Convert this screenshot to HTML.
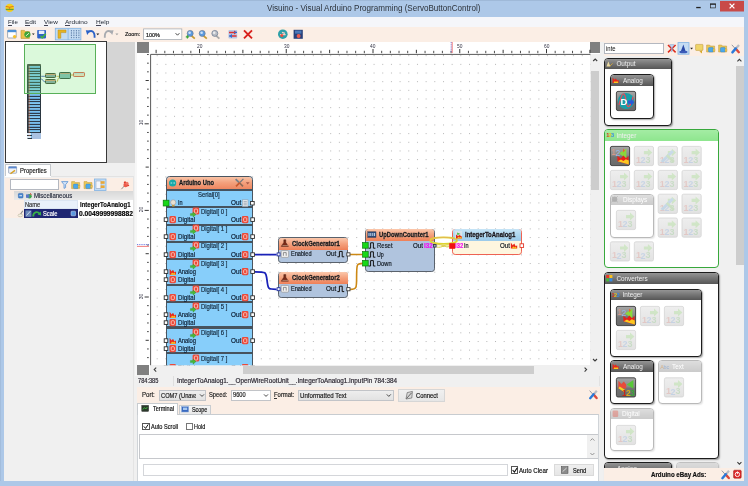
<!DOCTYPE html>
<html><head><meta charset="utf-8"><title>Visuino</title>
<style>
html,body{margin:0;padding:0}
body{width:748px;height:486px;overflow:hidden;position:relative;background:#adc8e8;font-family:"Liberation Sans",sans-serif;}
#w{position:absolute;left:0;top:0;width:748px;height:486px;overflow:hidden;filter:blur(0.35px)}
#w div{position:absolute}
.t{-webkit-text-stroke:0.18px;position:absolute;white-space:nowrap;line-height:1;transform-origin:0 50%;display:block}
.ov{position:absolute;left:0;top:0;pointer-events:none}
</style></head>
<body><div id="w">
<svg class="ov" width="748" height="486" viewBox="0 0 748 486">
<ellipse cx="9.7" cy="7.9" rx="4.3" ry="4.2" fill="#f6d020"/>
<rect x="5.8" y="8.8" width="7.8" height="1.3" fill="#6aa030"/>
<path d="M5.8 6.4 L9.6 7.2 L13.6 6.4 M9.6 7.2 V9" stroke="#e07818" stroke-width="1" fill="none"/>
<rect x="720" y="0" width="24" height="11.5" fill="#c84a48"/>
<path d="M729.6 3.6 L734.4 8.4 M734.4 3.6 L729.6 8.4" stroke="#fff" stroke-width="1.3"/>
<rect x="696.2" y="6.9" width="4.5" height="1.3" fill="#222"/>
<rect x="710.4" y="4" width="5.2" height="3.9" fill="none" stroke="#2a2a2a" stroke-width="0.7"/>
<rect x="710" y="3.6" width="6" height="1.1" fill="#222"/>
</svg>
<span class="t" style="left:267.00px;top:4px;font-size:8.4px;font-weight:normal;color:#2c323a;transform:scaleX(0.9622);-webkit-text-stroke:0;">Visuino - Visual Arduino Programming (ServoButtonControl)</span>
<div style="left:4px;top:16.8px;width:740px;height:464px;background:#f0f0f0;"></div>
<div style="left:4px;top:16.8px;width:740px;height:10.2px;background:#f5f6fa;"></div>
<div style="left:0px;top:0px;width:748px;height:0.8px;background:#9fb9d8;"></div>
<div style="left:0px;top:0px;width:0.8px;height:486px;background:#a3bddc;"></div>
<span class="t" style="left:7.80px;top:19px;font-size:6.2px;font-weight:normal;color:#1c2430;transform:scaleX(0.9809);-webkit-text-stroke:0;">File</span>
<div style="left:7.8px;top:25.2px;width:3.71502957432367px;height:0.6px;background:#445;"></div>
<span class="t" style="left:25.40px;top:19px;font-size:6.2px;font-weight:normal;color:#1c2430;transform:scaleX(1.0483);-webkit-text-stroke:0;">Edit</span>
<div style="left:25.4px;top:25.2px;width:4.335385591875594px;height:0.6px;background:#445;"></div>
<span class="t" style="left:43.80px;top:19px;font-size:6.2px;font-weight:normal;color:#1c2430;transform:scaleX(1.0355);-webkit-text-stroke:0;">View</span>
<div style="left:43.8px;top:25.2px;width:4.282343534200771px;height:0.6px;background:#445;"></div>
<span class="t" style="left:65.20px;top:19px;font-size:6.2px;font-weight:normal;color:#1c2430;transform:scaleX(1.0575);-webkit-text-stroke:0;">Arduino</span>
<div style="left:65.2px;top:25.2px;width:4.373400421567961px;height:0.6px;background:#445;"></div>
<span class="t" style="left:96.00px;top:19px;font-size:6.2px;font-weight:normal;color:#1c2430;transform:scaleX(1.0508);-webkit-text-stroke:0;">Help</span>
<div style="left:96px;top:25.2px;width:4.705219174960115px;height:0.6px;background:#445;"></div>
<div style="left:4px;top:27px;width:740px;height:14.5px;background:#fbeee5;"></div>
<svg class="ov" width="748" height="486" viewBox="0 0 748 486">
<rect x="7.6" y="30" width="8.6" height="8" rx="0.8" fill="#fff" stroke="#8a98a8" stroke-width="0.8"/>
<rect x="7.6" y="30" width="8.6" height="2.2" fill="#4a90d8"/>
<circle cx="14.6" cy="36.6" r="1.7" fill="#f6c02a"/>
<path d="M21 30.4 h3.4 l1 1.2 h4 v6.8 h-8.4z" fill="#e9c24a" stroke="#b8902a" stroke-width="0.6"/>
<circle cx="27.4" cy="34.6" r="3.1" fill="#3fa53a"/>
<path d="M25.8 36 L29 33.2" stroke="#d8f0c8" stroke-width="1"/>
<path d="M31.9 33.4 h2.8 l-1.4 1.6z" fill="#222"/>
<rect x="37.2" y="30" width="8.8" height="8.4" rx="0.8" fill="#2f62c8"/>
<rect x="38.8" y="30.6" width="5.6" height="3.4" fill="#e8eef8"/>
<path d="M40.6 36 l1.6 1.8 l3.6 -4" stroke="#46b43c" stroke-width="1.5" fill="none"/>
<rect x="55.3" y="28.3" width="25.6" height="11.6" fill="#c4dcf3" stroke="#7fb2e4" stroke-width="0.8"/>
<path d="M68.1 28.3 v11.6" stroke="#7fb2e4" stroke-width="0.8"/>
<path d="M58 38.2 v-8.2 h8 v2.6 h-5.2 v5.6z" fill="#e6b422" stroke="#b88a18" stroke-width="0.5"/>
<path d="M71.4 30 v8.2" stroke="#5f7fa8" stroke-width="1" stroke-dasharray="1.4 0.9"/>
<path d="M73.9 30 v8.2" stroke="#5f7fa8" stroke-width="1" stroke-dasharray="1.4 0.9"/>
<path d="M76.4 30 v8.2" stroke="#5f7fa8" stroke-width="1" stroke-dasharray="1.4 0.9"/>
<path d="M78.9 30 v8.2" stroke="#5f7fa8" stroke-width="1" stroke-dasharray="1.4 0.9"/>
<path d="M88 32.2 c3.2 -2.6 7 -1.2 6.6 5.6" stroke="#2a62c8" stroke-width="1.9" fill="none"/>
<path d="M85.8 30.2 l4.6 0.4 l-3.2 4.4z" fill="#2a62c8"/>
<path d="M96.3 33.6 h3 l-1.5 1.7z" fill="#222"/>
<path d="M111.4 32.2 c-3.2 -2.6 -7 -1.2 -6.6 5.6" stroke="#a8abb0" stroke-width="1.9" fill="none"/>
<path d="M113.6 30.2 l-4.6 0.4 l3.2 4.4z" fill="#a8abb0"/>
<path d="M115.4 33.6 h3 l-1.5 1.7z" fill="#a0a0a0"/>
<rect x="143.6" y="28.9" width="38.2" height="10.6" fill="#fff" stroke="#a9aeb6" stroke-width="0.8"/>
<path d="M175.6 33.2 l1.9 2 l1.9 -2" stroke="#333" stroke-width="0.9" fill="none"/>
<path d="M191.4 35.6 l3.4 3" stroke="#c89a30" stroke-width="1.8"/>
<circle cx="190.20000000000002" cy="33.4" r="3" fill="#5a9ae0" stroke="#6a7a90" stroke-width="0.7"/>
<circle cx="189.6" cy="32.8" r="1.3" fill="#fff" opacity="0.7"/>
<path d="M185.8 36.8 h3.2 M187.4 35.2 v3.2" stroke="#3aa53a" stroke-width="1.2"/>
<path d="M203.4 35.6 l3.4 3" stroke="#c89a30" stroke-width="1.8"/>
<circle cx="202.20000000000002" cy="33.4" r="3" fill="#5a9ae0" stroke="#6a7a90" stroke-width="0.7"/>
<circle cx="201.6" cy="32.8" r="1.3" fill="#fff" opacity="0.7"/>

<path d="M216 35.6 l3.4 3" stroke="#a8a8a8" stroke-width="1.8"/>
<circle cx="214.8" cy="33.4" r="3" fill="#b8bcc4" stroke="#6a7a90" stroke-width="0.7"/>
<circle cx="214.2" cy="32.8" r="1.3" fill="#fff" opacity="0.7"/>

<rect x="228.4" y="30" width="8.8" height="8.4" rx="1" fill="#b8c8e4"/>
<path d="M229 32.4 h5 M231.6 36 h5" stroke="#e03030" stroke-width="1.5"/>
<path d="M234 30.4 l3 2 l-3 2z" fill="#e03030"/><path d="M232 34 l-3 2 l3 2z" fill="#3a68c8"/>
<path d="M229 36 h3 M234 32.4 h3" stroke="#3a68c8" stroke-width="1.2"/>
<path d="M244 30.4 L252 38.4 M252 30.4 L244 38.4" stroke="#d8201c" stroke-width="1.9"/>
<circle cx="282.8" cy="34.2" r="4.8" fill="#2fa0a8"/>
<path d="M280 34.6 h5.6 M282 32.4 l3 1" stroke="#f6d0c8" stroke-width="1.2"/>
<circle cx="281.8" cy="35.6" r="1.5" fill="#e85040"/>
<rect x="293.6" y="29.8" width="9.2" height="9" fill="#28407a"/>
<rect x="295" y="30.6" width="6.4" height="3" fill="#4a78b8"/>
<circle cx="298.6" cy="36" r="2" fill="#e85a50"/>
</svg>
<span class="t" style="left:125.00px;top:31px;font-size:6.2px;font-weight:normal;color:#222;transform:scaleX(0.8764);">Zoom:</span>
<span class="t" style="left:146.00px;top:32px;font-size:6.2px;font-weight:normal;color:#111;transform:scaleX(0.8829);">100%</span>
<div style="left:106.4px;top:41.5px;width:28.6px;height:121px;background:#d5d5d5;"></div>
<div style="left:4.5px;top:41.3px;width:102.6px;height:121.3px;background:#fff;border:1px solid #383838;box-sizing:border-box;"></div>
<div style="left:26.6px;top:63.6px;width:14.6px;height:75.6px;background:linear-gradient(90deg,rgba(40,50,60,0.8) 0.4px,rgba(230,110,50,0.7) 0.8px,rgba(230,120,60,0.0) 2.4px,rgba(0,0,0,0) 11.6px,rgba(230,110,50,0.45) 13px,rgba(40,50,60,0.7) 13.6px),repeating-linear-gradient(180deg,#2e3c4a 0,#2e3c4a 1.1px,#72b8e6 1.1px,#84c8f0 2.1px,#5c9cce 2.8px);border:0.7px solid #2a3640;box-sizing:border-box;border-radius:1px;"></div>
<div style="left:26.6px;top:63.6px;width:14.6px;height:2.2px;background:#c8906a;border:0.5px solid #444;box-sizing:border-box;border-radius:1px 1px 0 0;"></div>
<div style="left:31.5px;top:132.5px;width:9.5px;height:6.4px;background:#a9c2e2;"></div>
<div style="left:27.4px;top:133.2px;width:3.6px;height:2px;background:#dfeaf5;"></div>
<div style="left:27.4px;top:136.2px;width:3.6px;height:2px;background:#dfeaf5;"></div>
<div style="left:44.9px;top:73.4px;width:11.6px;height:4.5px;background:#8aa0a8;border:0.7px solid #3a4630;box-sizing:border-box;border-radius:1.2px;"></div>
<div style="left:45.4px;top:73.9px;width:10.6px;height:1.6px;background:#d89a78;border-radius:1px 1px 0 0;"></div>
<div style="left:44.9px;top:79.2px;width:11.6px;height:4.5px;background:#8aa0a8;border:0.7px solid #3a4630;box-sizing:border-box;border-radius:1.2px;"></div>
<div style="left:45.4px;top:79.7px;width:10.6px;height:1.6px;background:#d89a78;border-radius:1px 1px 0 0;"></div>
<div style="left:59px;top:72.1px;width:11.6px;height:7.4px;background:#86b8b8;border:0.7px solid #2f4a40;box-sizing:border-box;border-radius:1.2px;"></div>
<div style="left:59.5px;top:72.6px;width:10.6px;height:1.6px;background:#c89a80;border-radius:1px 1px 0 0;"></div>
<div style="left:73px;top:72.1px;width:11.8px;height:4.5px;background:#f4dcc8;border:0.7px solid #e05848;box-sizing:border-box;border-radius:1.2px;"></div>
<div style="left:73.5px;top:72.6px;width:10.8px;height:1.6px;background:#c8d8e8;border-radius:1px 1px 0 0;"></div>
<svg class="ov" width="748" height="486" viewBox="0 0 748 486">
<path d="M41.2 76.3 h3.7 M41.2 79 c2 0 1.6 2.8 3.7 2.8" stroke="#2838b0" stroke-width="0.8" fill="none"/>
<path d="M56.5 76.3 h2.5 M56.5 82 c1.8 0 0.8 -4.2 2.5 -4.2" stroke="#c8a020" stroke-width="0.8" fill="none"/>
<path d="M70.6 75 h2.4" stroke="#c8a020" stroke-width="0.9" fill="none"/>
</svg>
<div style="left:24.2px;top:44px;width:71.4px;height:50.2px;background:rgba(110,230,110,0.25);border:1px solid #58b058;box-sizing:border-box;"></div>
<div style="left:4.5px;top:164.3px;width:46.8px;height:12.4px;background:#fff;border:0.8px solid #c4c8cc;border-bottom:none;box-sizing:border-box;"></div>
<div style="left:4.5px;top:176.3px;width:129px;height:304.5px;background:#f0f0f0;border-top:1px solid #e2e2e2;border-right:1px solid #e4e4e4;box-sizing:border-box;"></div>
<div style="left:5.2px;top:175.8px;width:45.4px;height:1.4px;background:#fff;"></div>
<span class="t" style="left:20.20px;top:168px;font-size:6.8px;font-weight:normal;color:#222;transform:scaleX(0.8647);">Properties</span>
<div style="left:5px;top:177.6px;width:127.6px;height:13.8px;background:#fbeee5;"></div>
<div style="left:10px;top:179.3px;width:48.6px;height:10.8px;background:#fff;border:0.8px solid #b4b8c0;box-sizing:border-box;"></div>
<div style="left:5px;top:191.4px;width:127.6px;height:8.8px;background:#fbeee5;"></div>
<div style="left:14px;top:191.4px;width:118.6px;height:8.8px;background:linear-gradient(180deg,#d8d8d8,#eaeaea);"></div>
<div style="left:5px;top:200.2px;width:127.6px;height:17.6px;background:#fbeee5;"></div>
<div style="left:24px;top:200.4px;width:54.2px;height:8.6px;background:#e9f1fb;border:0.6px solid #dbe5f2;box-sizing:border-box;"></div>
<div style="left:78.4px;top:200.2px;width:54.2px;height:17.6px;background:#fff;"></div>
<div style="left:24px;top:209.2px;width:54.2px;height:8.6px;background:#1f2672;"></div>
<span class="t" style="left:33.80px;top:193px;font-size:6.8px;font-weight:normal;color:#2a3040;transform:scaleX(0.8865);">Miscellaneous</span>
<span class="t" style="left:25.00px;top:202px;font-size:6.8px;font-weight:normal;color:#333;transform:scaleX(0.8379);">Name</span>
<span class="t" style="left:80.00px;top:202px;font-size:6.8px;font-weight:bold;color:#111;transform:scaleX(0.8813);">IntegerToAnalog1</span>
<span class="t" style="left:42.80px;top:211px;font-size:6.8px;font-weight:normal;color:#fff;transform:scaleX(0.8465);">Scale</span>
<div style="left:78.4px;top:208px;width:54.4px;height:10px;overflow:hidden">
<span class="t" style="left:0.40px;top:2px;font-size:7px;font-weight:bold;color:#000;transform:scaleX(0.9545);">0.00499999988824</span>
</div>
<svg class="ov" width="748" height="486" viewBox="0 0 748 486">
<rect x="8.6" y="166.6" width="8" height="6.6" rx="0.6" fill="#eef2f8" stroke="#8a98b0" stroke-width="0.7"/>
<rect x="8.6" y="166.6" width="8" height="1.8" fill="#5a88d0"/>
<path d="M10.4 173.8 l4.6 -3.4" stroke="#d8a020" stroke-width="1.4"/>
<path d="M61.6 181.6 h6.4 l-2.4 3 v3 l-1.6 0.8 v-3.8z" fill="#d4e4f8" stroke="#4a88d0" stroke-width="0.7"/>
<path d="M71.6 181.6 h3 l0.8 1 h4.2 v6 h-8z" fill="#ecc858" stroke="#c09a38" stroke-width="0.5"/>
<rect x="73.39999999999999" y="184" width="4.8" height="4.6" rx="1" fill="#4aa8ec" stroke="#2a78c0" stroke-width="0.4"/>
<rect x="78.0" y="185.6" width="2" height="2" fill="#ecc858" stroke="#c09a38" stroke-width="0.3"/>
<path d="M84 181.6 h3 l0.8 1 h4.2 v6 h-8z" fill="#ecc858" stroke="#c09a38" stroke-width="0.5"/>
<rect x="85.8" y="184" width="4.8" height="4.6" rx="1" fill="#4aa8ec" stroke="#2a78c0" stroke-width="0.4"/>
<rect x="90.4" y="185.6" width="2" height="2" fill="#ecc858" stroke="#c09a38" stroke-width="0.3"/>
<rect x="94.4" y="179" width="11.6" height="11.4" fill="#c4dcf3" stroke="#7fb2e4" stroke-width="0.8"/>
<rect x="96" y="181" width="5" height="7.4" fill="#f4f6fa" stroke="#8a98b0" stroke-width="0.5"/>
<rect x="100.6" y="181.2" width="4" height="2.6" fill="#e8a838"/>
<rect x="100.6" y="185.4" width="4" height="2.6" fill="#e8a838"/>
<path d="M121.4 189.2 l3.2 -3.6" stroke="#888" stroke-width="0.9"/>
<path d="M125 181 l4.4 4.4 l-1.6 1.2 l-4.2 -4z" fill="#e03828"/>
<circle cx="125.6" cy="185" r="2.2" fill="#ea5a4a"/>
<circle cx="127" cy="183.2" r="1.5" fill="#f07868"/>
<rect x="18.4" y="193.4" width="4.6" height="4.6" rx="0.8" fill="#4a88d0" stroke="#2a60a8" stroke-width="0.5"/>
<path d="M19.4 195.7 h2.6" stroke="#fff" stroke-width="0.8"/>
<circle cx="29.4" cy="196.2" r="2.3" fill="#3aa848"/>
<rect x="26" y="194.4" width="3.4" height="3.4" fill="#5a78c8"/>
<path d="M30 193.4 l1.6 1.4" stroke="#d83020" stroke-width="1"/>
<path d="M19.4 216 l3.4 -5.2" stroke="#8a8a8a" stroke-width="1.1"/>
<ellipse cx="20.4" cy="215.4" rx="2.4" ry="1.4" fill="#f4f0e0" stroke="#b0a890" stroke-width="0.5"/>
<rect x="25.4" y="210.4" width="6" height="6.4" fill="#6a88b8"/>
<path d="M26.4 215.6 l4 -4.4" stroke="#d8e0f0" stroke-width="0.9"/>
<path d="M33.2 216.4 c0 -4.6 4 -5.4 6.6 -2.6" stroke="#38b048" stroke-width="1.9" fill="none"/>
<path d="M40.8 211.6 l0.4 4 l-3.6 -1.2z" fill="#38b048"/>
<rect x="71" y="211.2" width="4.6" height="4.6" rx="0.8" fill="#5a98e0" stroke="#dfe8f8" stroke-width="0.5"/>
</svg>
<div style="left:137px;top:42px;width:463px;height:333px;background:#fff;"></div>
<div style="left:135px;top:41.5px;width:2px;height:334px;background:#f7f7f7;"></div>
<div style="left:137px;top:42px;width:12px;height:11px;background:#808080;"></div>
<div style="left:590.4px;top:42px;width:9.8px;height:11.4px;background:#808080;"></div>
<div style="left:137px;top:365.2px;width:12px;height:10px;background:#808080;"></div>
<div style="left:590.4px;top:53.6px;width:9.8px;height:311.6px;background:#f0f0f0;"></div>
<div style="left:591.2px;top:70.6px;width:7.4px;height:119.6px;background:#cdcdcd;"></div>
<div style="left:150px;top:365.2px;width:450.2px;height:10px;background:#f0f0f0;"></div>
<div style="left:243px;top:366px;width:291px;height:7.6px;background:#cdcdcd;"></div>
<svg class="ov" width="748" height="486" viewBox="0 0 748 486">
<defs><pattern id="gd" x="156.7" y="55.2" width="8.675" height="8.66" patternUnits="userSpaceOnUse"><rect x="0" y="0" width="1" height="1" fill="#b4b4b4"/></pattern></defs>
<rect x="151" y="55" width="439.4" height="310" fill="url(#gd)"/>
<path d="M150.6 365.2 V54.4 H590.4" stroke="#5a5a5a" stroke-width="1" fill="none"/>
<path d="M156.12 49.8 V53.2" stroke="#222" stroke-width="0.9"/>
<path d="M164.80 50.8 V53.2" stroke="#222" stroke-width="0.8"/>
<path d="M173.48 50.8 V53.2" stroke="#222" stroke-width="0.8"/>
<path d="M182.15 50.8 V53.2" stroke="#222" stroke-width="0.8"/>
<path d="M190.83 50.8 V53.2" stroke="#222" stroke-width="0.8"/>
<path d="M199.50 49 V53.2" stroke="#222" stroke-width="0.9"/>
<path d="M208.18 50.8 V53.2" stroke="#222" stroke-width="0.8"/>
<path d="M216.85 50.8 V53.2" stroke="#222" stroke-width="0.8"/>
<path d="M225.53 50.8 V53.2" stroke="#222" stroke-width="0.8"/>
<path d="M234.20 50.8 V53.2" stroke="#222" stroke-width="0.8"/>
<path d="M242.88 49.8 V53.2" stroke="#222" stroke-width="0.9"/>
<path d="M251.55 50.8 V53.2" stroke="#222" stroke-width="0.8"/>
<path d="M260.23 50.8 V53.2" stroke="#222" stroke-width="0.8"/>
<path d="M268.90 50.8 V53.2" stroke="#222" stroke-width="0.8"/>
<path d="M277.58 50.8 V53.2" stroke="#222" stroke-width="0.8"/>
<path d="M286.25 49 V53.2" stroke="#222" stroke-width="0.9"/>
<path d="M294.93 50.8 V53.2" stroke="#222" stroke-width="0.8"/>
<path d="M303.60 50.8 V53.2" stroke="#222" stroke-width="0.8"/>
<path d="M312.28 50.8 V53.2" stroke="#222" stroke-width="0.8"/>
<path d="M320.95 50.8 V53.2" stroke="#222" stroke-width="0.8"/>
<path d="M329.62 49.8 V53.2" stroke="#222" stroke-width="0.9"/>
<path d="M338.30 50.8 V53.2" stroke="#222" stroke-width="0.8"/>
<path d="M346.98 50.8 V53.2" stroke="#222" stroke-width="0.8"/>
<path d="M355.65 50.8 V53.2" stroke="#222" stroke-width="0.8"/>
<path d="M364.33 50.8 V53.2" stroke="#222" stroke-width="0.8"/>
<path d="M373.00 49 V53.2" stroke="#222" stroke-width="0.9"/>
<path d="M381.68 50.8 V53.2" stroke="#222" stroke-width="0.8"/>
<path d="M390.35 50.8 V53.2" stroke="#222" stroke-width="0.8"/>
<path d="M399.03 50.8 V53.2" stroke="#222" stroke-width="0.8"/>
<path d="M407.70 50.8 V53.2" stroke="#222" stroke-width="0.8"/>
<path d="M416.38 49.8 V53.2" stroke="#222" stroke-width="0.9"/>
<path d="M425.05 50.8 V53.2" stroke="#222" stroke-width="0.8"/>
<path d="M433.73 50.8 V53.2" stroke="#222" stroke-width="0.8"/>
<path d="M442.40 50.8 V53.2" stroke="#222" stroke-width="0.8"/>
<path d="M451.08 50.8 V53.2" stroke="#222" stroke-width="0.8"/>
<path d="M459.75 49 V53.2" stroke="#222" stroke-width="0.9"/>
<path d="M468.43 50.8 V53.2" stroke="#222" stroke-width="0.8"/>
<path d="M477.10 50.8 V53.2" stroke="#222" stroke-width="0.8"/>
<path d="M485.78 50.8 V53.2" stroke="#222" stroke-width="0.8"/>
<path d="M494.45 50.8 V53.2" stroke="#222" stroke-width="0.8"/>
<path d="M503.13 49.8 V53.2" stroke="#222" stroke-width="0.9"/>
<path d="M511.80 50.8 V53.2" stroke="#222" stroke-width="0.8"/>
<path d="M520.48 50.8 V53.2" stroke="#222" stroke-width="0.8"/>
<path d="M529.15 50.8 V53.2" stroke="#222" stroke-width="0.8"/>
<path d="M537.83 50.8 V53.2" stroke="#222" stroke-width="0.8"/>
<path d="M546.50 49 V53.2" stroke="#222" stroke-width="0.9"/>
<path d="M555.18 50.8 V53.2" stroke="#222" stroke-width="0.8"/>
<path d="M563.85 50.8 V53.2" stroke="#222" stroke-width="0.8"/>
<path d="M572.53 50.8 V53.2" stroke="#222" stroke-width="0.8"/>
<path d="M581.20 50.8 V53.2" stroke="#222" stroke-width="0.8"/>
<path d="M589.88 49.8 V53.2" stroke="#222" stroke-width="0.9"/>
<path d="M147 54.52 H148.8" stroke="#222" stroke-width="0.8"/>
<path d="M147 63.18 H148.8" stroke="#222" stroke-width="0.8"/>
<path d="M147 71.84 H148.8" stroke="#222" stroke-width="0.8"/>
<path d="M145.6 80.50 H148.8" stroke="#222" stroke-width="0.9"/>
<path d="M147 89.16 H148.8" stroke="#222" stroke-width="0.8"/>
<path d="M147 97.82 H148.8" stroke="#222" stroke-width="0.8"/>
<path d="M147 106.48 H148.8" stroke="#222" stroke-width="0.8"/>
<path d="M147 115.14 H148.8" stroke="#222" stroke-width="0.8"/>
<path d="M144.6 123.80 H148.8" stroke="#222" stroke-width="0.9"/>
<path d="M147 132.46 H148.8" stroke="#222" stroke-width="0.8"/>
<path d="M147 141.12 H148.8" stroke="#222" stroke-width="0.8"/>
<path d="M147 149.78 H148.8" stroke="#222" stroke-width="0.8"/>
<path d="M147 158.44 H148.8" stroke="#222" stroke-width="0.8"/>
<path d="M145.6 167.10 H148.8" stroke="#222" stroke-width="0.9"/>
<path d="M147 175.76 H148.8" stroke="#222" stroke-width="0.8"/>
<path d="M147 184.42 H148.8" stroke="#222" stroke-width="0.8"/>
<path d="M147 193.08 H148.8" stroke="#222" stroke-width="0.8"/>
<path d="M147 201.74 H148.8" stroke="#222" stroke-width="0.8"/>
<path d="M144.6 210.40 H148.8" stroke="#222" stroke-width="0.9"/>
<path d="M147 219.06 H148.8" stroke="#222" stroke-width="0.8"/>
<path d="M147 227.72 H148.8" stroke="#222" stroke-width="0.8"/>
<path d="M147 236.38 H148.8" stroke="#222" stroke-width="0.8"/>
<path d="M147 245.04 H148.8" stroke="#222" stroke-width="0.8"/>
<path d="M145.6 253.70 H148.8" stroke="#222" stroke-width="0.9"/>
<path d="M147 262.36 H148.8" stroke="#222" stroke-width="0.8"/>
<path d="M147 271.02 H148.8" stroke="#222" stroke-width="0.8"/>
<path d="M147 279.68 H148.8" stroke="#222" stroke-width="0.8"/>
<path d="M147 288.34 H148.8" stroke="#222" stroke-width="0.8"/>
<path d="M144.6 297.00 H148.8" stroke="#222" stroke-width="0.9"/>
<path d="M147 305.66 H148.8" stroke="#222" stroke-width="0.8"/>
<path d="M147 314.32 H148.8" stroke="#222" stroke-width="0.8"/>
<path d="M147 322.98 H148.8" stroke="#222" stroke-width="0.8"/>
<path d="M147 331.64 H148.8" stroke="#222" stroke-width="0.8"/>
<path d="M145.6 340.30 H148.8" stroke="#222" stroke-width="0.9"/>
<path d="M147 348.96 H148.8" stroke="#222" stroke-width="0.8"/>
<path d="M147 357.62 H148.8" stroke="#222" stroke-width="0.8"/>
<path d="M451.2 42 V53" stroke="#5a6ae0" stroke-width="0.9" stroke-dasharray="1.2 1"/>
<path d="M452.2 42 V53" stroke="#f07070" stroke-width="0.9"/>
<path d="M137 244.6 H149" stroke="#5a6ae0" stroke-width="0.9" stroke-dasharray="1.2 1"/>
<path d="M137 246.4 H149" stroke="#f07070" stroke-width="0.9"/>
<path d="M593.2 61 l2 -2 l2 2" stroke="#3c3c3c" stroke-width="1.1" fill="none"/>
<path d="M593 359 l2 2 l2 -2" stroke="#3c3c3c" stroke-width="1.1" fill="none"/>
<path d="M156.2 367.6 l-2 2 l2 2" stroke="#3c3c3c" stroke-width="1.1" fill="none"/>
<path d="M584.6 367.6 l2 2 l-2 2" stroke="#3c3c3c" stroke-width="1.1" fill="none"/>
</svg>
<span class="t" style="left:196.80px;top:44px;font-size:5.4px;font-weight:normal;color:#334;transform:scaleX(0.8990);-webkit-text-stroke:0;">20</span>
<span class="t" style="left:283.60px;top:44px;font-size:5.4px;font-weight:normal;color:#334;transform:scaleX(0.8990);-webkit-text-stroke:0;">30</span>
<span class="t" style="left:370.30px;top:44px;font-size:5.4px;font-weight:normal;color:#334;transform:scaleX(0.8990);-webkit-text-stroke:0;">40</span>
<span class="t" style="left:457.00px;top:44px;font-size:5.4px;font-weight:normal;color:#334;transform:scaleX(0.8990);-webkit-text-stroke:0;">50</span>
<span class="t" style="left:543.80px;top:44px;font-size:5.4px;font-weight:normal;color:#334;transform:scaleX(0.8990);-webkit-text-stroke:0;">60</span>
<span class="t" style="left:138.4px;top:120.4px;font-size:5px;color:#334;-webkit-text-stroke:0;transform:rotate(-90deg);transform-origin:50% 50%;width:6px;text-align:center">10</span>
<span class="t" style="left:138.4px;top:207.0px;font-size:5px;color:#334;-webkit-text-stroke:0;transform:rotate(-90deg);transform-origin:50% 50%;width:6px;text-align:center">20</span>
<span class="t" style="left:138.4px;top:293.6px;font-size:5px;color:#334;-webkit-text-stroke:0;transform:rotate(-90deg);transform-origin:50% 50%;width:6px;text-align:center">30</span>
<div style="left:0;top:0;width:748px;height:486px;clip-path:polygon(151px 55px,590.4px 55px,590.4px 365.2px,151px 365.2px);">
<div style="left:166px;top:176px;width:87px;height:200px;background:#87cefa;border:1px solid #4a5560;box-sizing:border-box;border-radius:3.5px 3.5px 0 0;"></div>
<div style="left:166.6px;top:176.6px;width:85.8px;height:13px;background:linear-gradient(180deg,#f9c3a6 0%,#f3a07c 45%,#ee835c 100%);border-radius:3px 3px 0 0;"></div>
<div style="left:166px;top:188.5px;width:87px;height:2.2px;background:#46535e;"></div>
<div style="left:166px;top:206.3px;width:87px;height:2.2px;background:#46535e;"></div>
<div style="left:166px;top:223.5px;width:87px;height:2.2px;background:#46535e;"></div>
<div style="left:166px;top:240.8px;width:87px;height:2.2px;background:#46535e;"></div>
<div style="left:166px;top:258.2px;width:87px;height:2.2px;background:#46535e;"></div>
<div style="left:166px;top:284.2px;width:87px;height:2.2px;background:#46535e;"></div>
<div style="left:166px;top:300.5px;width:87px;height:2.2px;background:#46535e;"></div>
<div style="left:166px;top:326.4px;width:87px;height:2.2px;background:#46535e;"></div>
<div style="left:166px;top:352.29999999999995px;width:87px;height:2.2px;background:#46535e;"></div>
<span class="t" style="left:179.00px;top:180px;font-size:6.4px;font-weight:bold;color:#161210;transform:scaleX(0.9033);text-shadow:0 0 1px #fff;-webkit-text-stroke:0.3px;">Arduino Uno</span>
<span class="t" style="left:198.40px;top:192px;font-size:6.8px;font-weight:normal;color:#14283c;transform:scaleX(0.8659);">Serial[0]</span>
<span class="t" style="left:178.20px;top:200px;font-size:6.8px;font-weight:normal;color:#0c1c30;transform:scaleX(0.8111);">In</span>
<span class="t" style="left:231.00px;top:200px;font-size:6.8px;font-weight:normal;color:#0c1c30;transform:scaleX(0.9306);">Out</span>
<span class="t" style="left:200.80px;top:209px;font-size:6.8px;font-weight:normal;color:#14283c;transform:scaleX(0.8732);">Digital[ 0 ]</span>
<span class="t" style="left:177.60px;top:217px;font-size:6.8px;font-weight:normal;color:#0c1c30;transform:scaleX(0.8996);">Digital</span>
<span class="t" style="left:231.00px;top:217px;font-size:6.8px;font-weight:normal;color:#0c1c30;transform:scaleX(0.9306);">Out</span>
<span class="t" style="left:200.80px;top:226px;font-size:6.8px;font-weight:normal;color:#14283c;transform:scaleX(0.8732);">Digital[ 1 ]</span>
<span class="t" style="left:177.60px;top:234px;font-size:6.8px;font-weight:normal;color:#0c1c30;transform:scaleX(0.8996);">Digital</span>
<span class="t" style="left:231.00px;top:234px;font-size:6.8px;font-weight:normal;color:#0c1c30;transform:scaleX(0.9306);">Out</span>
<span class="t" style="left:200.80px;top:243px;font-size:6.8px;font-weight:normal;color:#14283c;transform:scaleX(0.8732);">Digital[ 2 ]</span>
<span class="t" style="left:177.60px;top:252px;font-size:6.8px;font-weight:normal;color:#0c1c30;transform:scaleX(0.8996);">Digital</span>
<span class="t" style="left:231.00px;top:252px;font-size:6.8px;font-weight:normal;color:#0c1c30;transform:scaleX(0.9306);">Out</span>
<span class="t" style="left:200.80px;top:261px;font-size:6.8px;font-weight:normal;color:#14283c;transform:scaleX(0.8732);">Digital[ 3 ]</span>
<span class="t" style="left:177.60px;top:269px;font-size:6.8px;font-weight:normal;color:#0c1c30;transform:scaleX(0.8501);">Analog</span>
<span class="t" style="left:231.00px;top:269px;font-size:6.8px;font-weight:normal;color:#0c1c30;transform:scaleX(0.9306);">Out</span>
<span class="t" style="left:177.60px;top:277px;font-size:6.8px;font-weight:normal;color:#0c1c30;transform:scaleX(0.8996);">Digital</span>
<span class="t" style="left:200.80px;top:287px;font-size:6.8px;font-weight:normal;color:#14283c;transform:scaleX(0.8732);">Digital[ 4 ]</span>
<span class="t" style="left:177.60px;top:295px;font-size:6.8px;font-weight:normal;color:#0c1c30;transform:scaleX(0.8996);">Digital</span>
<span class="t" style="left:231.00px;top:295px;font-size:6.8px;font-weight:normal;color:#0c1c30;transform:scaleX(0.9306);">Out</span>
<span class="t" style="left:200.80px;top:304px;font-size:6.8px;font-weight:normal;color:#14283c;transform:scaleX(0.8732);">Digital[ 5 ]</span>
<span class="t" style="left:177.60px;top:312px;font-size:6.8px;font-weight:normal;color:#0c1c30;transform:scaleX(0.8501);">Analog</span>
<span class="t" style="left:231.00px;top:312px;font-size:6.8px;font-weight:normal;color:#0c1c30;transform:scaleX(0.9306);">Out</span>
<span class="t" style="left:177.60px;top:320px;font-size:6.8px;font-weight:normal;color:#0c1c30;transform:scaleX(0.8996);">Digital</span>
<span class="t" style="left:200.80px;top:330px;font-size:6.8px;font-weight:normal;color:#14283c;transform:scaleX(0.8732);">Digital[ 6 ]</span>
<span class="t" style="left:177.60px;top:338px;font-size:6.8px;font-weight:normal;color:#0c1c30;transform:scaleX(0.8501);">Analog</span>
<span class="t" style="left:231.00px;top:338px;font-size:6.8px;font-weight:normal;color:#0c1c30;transform:scaleX(0.9306);">Out</span>
<span class="t" style="left:177.60px;top:346px;font-size:6.8px;font-weight:normal;color:#0c1c30;transform:scaleX(0.8996);">Digital</span>
<span class="t" style="left:200.80px;top:356px;font-size:6.8px;font-weight:normal;color:#14283c;transform:scaleX(0.8732);">Digital[ 7 ]</span>
<span class="t" style="left:177.60px;top:365px;font-size:6.8px;font-weight:normal;color:#0c1c30;transform:scaleX(0.8996);">Digital</span>
<span class="t" style="left:231.00px;top:365px;font-size:6.8px;font-weight:normal;color:#0c1c30;transform:scaleX(0.9306);">Out</span>
<div style="left:278px;top:237px;width:70.19999999999999px;height:26.19999999999999px;background:#b0c4de;border:1px solid #5a626c;box-sizing:border-box;border-radius:3.2px;"></div>
<div style="left:278.6px;top:237.6px;width:68.99999999999999px;height:12.099999999999989px;background:linear-gradient(180deg,#fbc8ac 0%,#f4a07c 50%,#ee8058 100%);border-radius:2.6px 2.6px 0 0;"></div>
<span class="t" style="left:291.80px;top:241px;font-size:6.4px;font-weight:bold;color:#1a1210;transform:scaleX(0.9268);text-shadow:0 0 1px #fff;-webkit-text-stroke:0.3px;">ClockGenerator1</span>
<span class="t" style="left:291.00px;top:251px;font-size:6.8px;font-weight:normal;color:#101820;transform:scaleX(0.8254);">Enabled</span>
<span class="t" style="left:326.40px;top:251px;font-size:6.8px;font-weight:normal;color:#101820;transform:scaleX(0.9306);">Out</span>
<div style="left:278px;top:271.8px;width:70.19999999999999px;height:26.19999999999999px;background:#b0c4de;border:1px solid #5a626c;box-sizing:border-box;border-radius:3.2px;"></div>
<div style="left:278.6px;top:272.40000000000003px;width:68.99999999999999px;height:12.099999999999989px;background:linear-gradient(180deg,#fbc8ac 0%,#f4a07c 50%,#ee8058 100%);border-radius:2.6px 2.6px 0 0;"></div>
<span class="t" style="left:291.80px;top:275px;font-size:6.4px;font-weight:bold;color:#1a1210;transform:scaleX(0.9268);text-shadow:0 0 1px #fff;-webkit-text-stroke:0.3px;">ClockGenerator2</span>
<span class="t" style="left:291.00px;top:286px;font-size:6.8px;font-weight:normal;color:#101820;transform:scaleX(0.8254);">Enabled</span>
<span class="t" style="left:326.40px;top:286px;font-size:6.8px;font-weight:normal;color:#101820;transform:scaleX(0.9306);">Out</span>
<div style="left:365.4px;top:228.6px;width:69.20000000000005px;height:43.400000000000006px;background:#b0c4de;border:1px solid #5a626c;box-sizing:border-box;border-radius:3.2px;"></div>
<div style="left:366.0px;top:229.2px;width:68.00000000000004px;height:11.700000000000012px;background:linear-gradient(180deg,#fbc8ac 0%,#f4a07c 50%,#ee8058 100%);border-radius:2.6px 2.6px 0 0;"></div>
<span class="t" style="left:378.60px;top:232px;font-size:6.4px;font-weight:bold;color:#1a1210;transform:scaleX(0.9160);text-shadow:0 0 1px #fff;-webkit-text-stroke:0.3px;">UpDownCounter1</span>
<span class="t" style="left:377.20px;top:243px;font-size:6.8px;font-weight:normal;color:#101820;transform:scaleX(0.8782);">Reset</span>
<span class="t" style="left:377.20px;top:252px;font-size:6.8px;font-weight:normal;color:#101820;transform:scaleX(0.7823);">Up</span>
<span class="t" style="left:377.20px;top:261px;font-size:6.8px;font-weight:normal;color:#101820;transform:scaleX(0.8398);">Down</span>
<span class="t" style="left:413.40px;top:243px;font-size:6.8px;font-weight:normal;color:#101820;transform:scaleX(0.9124);">Out</span>
<span class="t" style="left:424.00px;top:243px;font-size:6.6px;font-weight:bold;color:#f010f0;transform:scaleX(0.9591);">I32</span>
<div style="left:452px;top:228.6px;width:70px;height:26.0px;background:#fef6df;border:1.1px solid #ee6252;box-sizing:border-box;border-radius:3.2px;"></div>
<div style="left:452.66px;top:229.26px;width:68.68px;height:11.640000000000011px;background:linear-gradient(180deg,#c6e4f6 0%,#a8d4ee 60%,#9ccaea 100%);border-radius:2.6px 2.6px 0 0;"></div>
<span class="t" style="left:465.20px;top:232px;font-size:6.4px;font-weight:bold;color:#14141c;transform:scaleX(0.9346);text-shadow:0 0 1px #fff;-webkit-text-stroke:0.3px;">IntegerToAnalog1</span>
<span class="t" style="left:455.20px;top:243px;font-size:6.6px;font-weight:bold;color:#f010f0;transform:scaleX(0.8937);">I32</span>
<span class="t" style="left:464.20px;top:243px;font-size:6.8px;font-weight:normal;color:#101820;transform:scaleX(0.8111);">In</span>
<span class="t" style="left:499.80px;top:243px;font-size:6.8px;font-weight:normal;color:#101820;transform:scaleX(0.9124);">Out</span>
<svg class="ov" width="748" height="486" viewBox="0 0 748 486">
<path d="M254.8 254.6 H276.6" stroke="#1a22b8" stroke-width="1.6" fill="none"/>
<path d="M254.8 271.8 C266 271.8 266 271.8 267 280 C268 289.4 268 289.4 276.6 289.4" stroke="#1a22b8" stroke-width="1.8" fill="none"/>
<path d="M350.2 254.6 H362.6" stroke="#cc8814" stroke-width="1.5" fill="none"/>
<path d="M350.2 289.4 C356.6 289.4 356.6 288 356.6 278 C356.6 264 356.6 263.4 362.6 263.4" stroke="#cc8814" stroke-width="1.6" fill="none"/>
<ellipse cx="443.6" cy="240.6" rx="13.4" ry="3.3" fill="none" stroke="#ddd430" stroke-width="1.7"/>
<path d="M431 239.4 C436 236.6 451 236.6 456.4 239.4" stroke="#f09080" stroke-width="0.5" fill="none" opacity="0.8"/>
<path d="M436.6 245 C442 243.4 446 248.4 449.4 246.4 M436.6 247 C442 248.4 446 243.6 449.4 245.2" stroke="#d8c838" stroke-width="1" fill="none"/>
<rect x="163.2" y="200.2" width="5.8" height="5.8" fill="#18d818" stroke="#0a7a0a" stroke-width="0.7"/>
<circle cx="173.2" cy="202.4" r="2.6" fill="#e8e0d0" stroke="#988" stroke-width="0.5"/>
<path d="M172 205 h2.6 v1.4 h-2.6z" fill="#c8a040"/>
<rect x="242.4" y="199.8" width="5.6" height="6.8" fill="#e4e8ec" stroke="#8a98a8" stroke-width="0.5"/>
<path d="M243.6 201.6 h3.2 M243.6 203.2 h3.2 M243.6 204.8 h3.2" stroke="#6a7888" stroke-width="0.5"/>
<rect x="250.6" y="201.39999999999998" width="3.6" height="3.6" fill="#fff" stroke="#222" stroke-width="0.85"/>
<rect x="192.6" y="207.4" width="6.6" height="7.2" rx="1.4" fill="#ea4a3a"/>
<rect x="194.4" y="209.1" width="3.2" height="3.9" rx="1" fill="none" stroke="#fbd8d0" stroke-width="0.8"/>
<path d="M190.4 213.6 h2.6 v-1.6 l3 2.6 l-3 2.6 v-1.6 h-2.6z" fill="#48b838" stroke="#2a8a20" stroke-width="0.3"/>
<rect x="164.2" y="217.79999999999998" width="3.6" height="3.6" fill="#fff" stroke="#222" stroke-width="0.85"/>
<rect x="169.4" y="216.0" width="6.6" height="7.2" rx="1.4" fill="#ea4a3a"/>
<rect x="171.20000000000002" y="217.7" width="3.2" height="3.9" rx="1" fill="none" stroke="#fbd8d0" stroke-width="0.8"/>
<rect x="241.8" y="216.0" width="6.6" height="7.2" rx="1.4" fill="#ea4a3a"/>
<rect x="243.60000000000002" y="217.7" width="3.2" height="3.9" rx="1" fill="none" stroke="#fbd8d0" stroke-width="0.8"/>
<rect x="250.79999999999998" y="217.79999999999998" width="3.6" height="3.6" fill="#fff" stroke="#222" stroke-width="0.85"/>
<rect x="192.6" y="224.4" width="6.6" height="7.2" rx="1.4" fill="#ea4a3a"/>
<rect x="194.4" y="226.1" width="3.2" height="3.9" rx="1" fill="none" stroke="#fbd8d0" stroke-width="0.8"/>
<path d="M190.4 230.6 h2.6 v-1.6 l3 2.6 l-3 2.6 v-1.6 h-2.6z" fill="#48b838" stroke="#2a8a20" stroke-width="0.3"/>
<rect x="164.2" y="234.79999999999998" width="3.6" height="3.6" fill="#fff" stroke="#222" stroke-width="0.85"/>
<rect x="169.4" y="233.0" width="6.6" height="7.2" rx="1.4" fill="#ea4a3a"/>
<rect x="171.20000000000002" y="234.7" width="3.2" height="3.9" rx="1" fill="none" stroke="#fbd8d0" stroke-width="0.8"/>
<rect x="241.8" y="233.0" width="6.6" height="7.2" rx="1.4" fill="#ea4a3a"/>
<rect x="243.60000000000002" y="234.7" width="3.2" height="3.9" rx="1" fill="none" stroke="#fbd8d0" stroke-width="0.8"/>
<rect x="250.79999999999998" y="234.79999999999998" width="3.6" height="3.6" fill="#fff" stroke="#222" stroke-width="0.85"/>
<rect x="192.6" y="241.4" width="6.6" height="7.2" rx="1.4" fill="#ea4a3a"/>
<rect x="194.4" y="243.1" width="3.2" height="3.9" rx="1" fill="none" stroke="#fbd8d0" stroke-width="0.8"/>
<path d="M190.4 247.6 h2.6 v-1.6 l3 2.6 l-3 2.6 v-1.6 h-2.6z" fill="#48b838" stroke="#2a8a20" stroke-width="0.3"/>
<rect x="164.2" y="252.79999999999998" width="3.6" height="3.6" fill="#fff" stroke="#222" stroke-width="0.85"/>
<rect x="169.4" y="251.0" width="6.6" height="7.2" rx="1.4" fill="#ea4a3a"/>
<rect x="171.20000000000002" y="252.7" width="3.2" height="3.9" rx="1" fill="none" stroke="#fbd8d0" stroke-width="0.8"/>
<rect x="241.8" y="251.0" width="6.6" height="7.2" rx="1.4" fill="#ea4a3a"/>
<rect x="243.60000000000002" y="252.7" width="3.2" height="3.9" rx="1" fill="none" stroke="#fbd8d0" stroke-width="0.8"/>
<rect x="250.79999999999998" y="252.79999999999998" width="3.6" height="3.6" fill="#fff" stroke="#222" stroke-width="0.85"/>
<rect x="192.6" y="259.4" width="6.6" height="7.2" rx="1.4" fill="#ea4a3a"/>
<rect x="194.4" y="261.1" width="3.2" height="3.9" rx="1" fill="none" stroke="#fbd8d0" stroke-width="0.8"/>
<path d="M190.4 265.6 h2.6 v-1.6 l3 2.6 l-3 2.6 v-1.6 h-2.6z" fill="#48b838" stroke="#2a8a20" stroke-width="0.3"/>
<rect x="164.2" y="269.8" width="3.6" height="3.6" fill="#fff" stroke="#222" stroke-width="0.85"/>
<path d="M169.6 274.8 v-6 l2 2.6 l1.4 -1.6 l1.4 2.4 l1.6 -0.6 v3.2z" fill="#e8281c"/>
<path d="M170.6 274.8 l1.4 -2.4 l1.2 1.2 l1.2 -1 l1.4 2.2z" fill="#f8c820"/>
<rect x="241.8" y="268.0" width="6.6" height="7.2" rx="1.4" fill="#ea4a3a"/>
<rect x="243.60000000000002" y="269.70000000000005" width="3.2" height="3.9" rx="1" fill="none" stroke="#fbd8d0" stroke-width="0.8"/>
<rect x="250.79999999999998" y="269.8" width="3.6" height="3.6" fill="#fff" stroke="#222" stroke-width="0.85"/>
<rect x="164.2" y="277.8" width="3.6" height="3.6" fill="#fff" stroke="#222" stroke-width="0.85"/>
<rect x="169.4" y="276.0" width="6.6" height="7.2" rx="1.4" fill="#ea4a3a"/>
<rect x="171.20000000000002" y="277.70000000000005" width="3.2" height="3.9" rx="1" fill="none" stroke="#fbd8d0" stroke-width="0.8"/>
<rect x="192.6" y="285.4" width="6.6" height="7.2" rx="1.4" fill="#ea4a3a"/>
<rect x="194.4" y="287.1" width="3.2" height="3.9" rx="1" fill="none" stroke="#fbd8d0" stroke-width="0.8"/>
<path d="M190.4 291.6 h2.6 v-1.6 l3 2.6 l-3 2.6 v-1.6 h-2.6z" fill="#48b838" stroke="#2a8a20" stroke-width="0.3"/>
<rect x="164.2" y="295.8" width="3.6" height="3.6" fill="#fff" stroke="#222" stroke-width="0.85"/>
<rect x="169.4" y="294.0" width="6.6" height="7.2" rx="1.4" fill="#ea4a3a"/>
<rect x="171.20000000000002" y="295.70000000000005" width="3.2" height="3.9" rx="1" fill="none" stroke="#fbd8d0" stroke-width="0.8"/>
<rect x="241.8" y="294.0" width="6.6" height="7.2" rx="1.4" fill="#ea4a3a"/>
<rect x="243.60000000000002" y="295.70000000000005" width="3.2" height="3.9" rx="1" fill="none" stroke="#fbd8d0" stroke-width="0.8"/>
<rect x="250.79999999999998" y="295.8" width="3.6" height="3.6" fill="#fff" stroke="#222" stroke-width="0.85"/>
<rect x="192.6" y="302.4" width="6.6" height="7.2" rx="1.4" fill="#ea4a3a"/>
<rect x="194.4" y="304.1" width="3.2" height="3.9" rx="1" fill="none" stroke="#fbd8d0" stroke-width="0.8"/>
<path d="M190.4 308.6 h2.6 v-1.6 l3 2.6 l-3 2.6 v-1.6 h-2.6z" fill="#48b838" stroke="#2a8a20" stroke-width="0.3"/>
<rect x="164.2" y="312.8" width="3.6" height="3.6" fill="#fff" stroke="#222" stroke-width="0.85"/>
<path d="M169.6 317.8 v-6 l2 2.6 l1.4 -1.6 l1.4 2.4 l1.6 -0.6 v3.2z" fill="#e8281c"/>
<path d="M170.6 317.8 l1.4 -2.4 l1.2 1.2 l1.2 -1 l1.4 2.2z" fill="#f8c820"/>
<rect x="241.8" y="311.0" width="6.6" height="7.2" rx="1.4" fill="#ea4a3a"/>
<rect x="243.60000000000002" y="312.70000000000005" width="3.2" height="3.9" rx="1" fill="none" stroke="#fbd8d0" stroke-width="0.8"/>
<rect x="250.79999999999998" y="312.8" width="3.6" height="3.6" fill="#fff" stroke="#222" stroke-width="0.85"/>
<rect x="164.2" y="320.8" width="3.6" height="3.6" fill="#fff" stroke="#222" stroke-width="0.85"/>
<rect x="169.4" y="319.0" width="6.6" height="7.2" rx="1.4" fill="#ea4a3a"/>
<rect x="171.20000000000002" y="320.70000000000005" width="3.2" height="3.9" rx="1" fill="none" stroke="#fbd8d0" stroke-width="0.8"/>
<rect x="192.6" y="328.4" width="6.6" height="7.2" rx="1.4" fill="#ea4a3a"/>
<rect x="194.4" y="330.1" width="3.2" height="3.9" rx="1" fill="none" stroke="#fbd8d0" stroke-width="0.8"/>
<path d="M190.4 334.6 h2.6 v-1.6 l3 2.6 l-3 2.6 v-1.6 h-2.6z" fill="#48b838" stroke="#2a8a20" stroke-width="0.3"/>
<rect x="164.2" y="338.8" width="3.6" height="3.6" fill="#fff" stroke="#222" stroke-width="0.85"/>
<path d="M169.6 343.8 v-6 l2 2.6 l1.4 -1.6 l1.4 2.4 l1.6 -0.6 v3.2z" fill="#e8281c"/>
<path d="M170.6 343.8 l1.4 -2.4 l1.2 1.2 l1.2 -1 l1.4 2.2z" fill="#f8c820"/>
<rect x="241.8" y="337.0" width="6.6" height="7.2" rx="1.4" fill="#ea4a3a"/>
<rect x="243.60000000000002" y="338.70000000000005" width="3.2" height="3.9" rx="1" fill="none" stroke="#fbd8d0" stroke-width="0.8"/>
<rect x="250.79999999999998" y="338.8" width="3.6" height="3.6" fill="#fff" stroke="#222" stroke-width="0.85"/>
<rect x="164.2" y="346.8" width="3.6" height="3.6" fill="#fff" stroke="#222" stroke-width="0.85"/>
<rect x="169.4" y="345.0" width="6.6" height="7.2" rx="1.4" fill="#ea4a3a"/>
<rect x="171.20000000000002" y="346.70000000000005" width="3.2" height="3.9" rx="1" fill="none" stroke="#fbd8d0" stroke-width="0.8"/>
<rect x="192.6" y="354.4" width="6.6" height="7.2" rx="1.4" fill="#ea4a3a"/>
<rect x="194.4" y="356.1" width="3.2" height="3.9" rx="1" fill="none" stroke="#fbd8d0" stroke-width="0.8"/>
<path d="M190.4 360.6 h2.6 v-1.6 l3 2.6 l-3 2.6 v-1.6 h-2.6z" fill="#48b838" stroke="#2a8a20" stroke-width="0.3"/>
<rect x="164.2" y="365.8" width="3.6" height="3.6" fill="#fff" stroke="#222" stroke-width="0.85"/>
<rect x="169.4" y="364.0" width="6.6" height="7.2" rx="1.4" fill="#ea4a3a"/>
<rect x="171.20000000000002" y="365.70000000000005" width="3.2" height="3.9" rx="1" fill="none" stroke="#fbd8d0" stroke-width="0.8"/>
<rect x="241.8" y="364.0" width="6.6" height="7.2" rx="1.4" fill="#ea4a3a"/>
<rect x="243.60000000000002" y="365.70000000000005" width="3.2" height="3.9" rx="1" fill="none" stroke="#fbd8d0" stroke-width="0.8"/>
<rect x="250.79999999999998" y="365.8" width="3.6" height="3.6" fill="#fff" stroke="#222" stroke-width="0.85"/>
<circle cx="172.6" cy="183" r="3.6" fill="#18a8a8"/>
<path d="M170.6 183 h1.6 M173.4 183 h1.6" stroke="#fff" stroke-width="0.7"/>
<path d="M235.6 179.2 l3.6 3.4" stroke="#7a8088" stroke-width="1.8"/>
<path d="M239.4 182.8 l3.6 3.6" stroke="#8a6a58" stroke-width="1.6"/>
<path d="M243.4 178.8 l-3.4 3.6" stroke="#70787e" stroke-width="1.2"/>
<path d="M239.8 182.6 l-3.8 3.8" stroke="#c85a30" stroke-width="1.8"/>
<path d="M245.8 182.2 h3.8 l-1.9 2.2z" fill="#a85a48"/>
<path d="M283.8 239.8 h2 v2.6 l2.6 4 h-7.2 l2.6 -4z" fill="#7a2a18" stroke="#3a1a10" stroke-width="0.4"/>
<path d="M282.4 245.6 h5.6" stroke="#d8b8a0" stroke-width="0.6"/>
<rect x="277.1" y="252.9" width="3" height="3" fill="#f0f2ff" stroke="#1a2a9a" stroke-width="0.85"/>
<rect x="281.2" y="250.6" width="7.4" height="6.8" rx="1" fill="#f0f0f0" stroke="#8a8a8a" stroke-width="0.6"/>
<path d="M283.4 255.8 v-3.2 h2.8 v3.2" stroke="#666" stroke-width="0.7" fill="none"/>
<path d="M337.40000000000003 256.8 h2 v-5.4 h2.8 v5.4 h2" stroke="#111" stroke-width="1" fill="none"/>
<rect x="346.79999999999995" y="252.8" width="3.2" height="3.2" fill="#fff" stroke="#333" stroke-width="0.85"/>
<path d="M283.8 274.59999999999997 h2 v2.6 l2.6 4 h-7.2 l2.6 -4z" fill="#7a2a18" stroke="#3a1a10" stroke-width="0.4"/>
<path d="M282.4 280.4 h5.6" stroke="#d8b8a0" stroke-width="0.6"/>
<rect x="277.1" y="287.7" width="3" height="3" fill="#f0f2ff" stroke="#1a2a9a" stroke-width="0.85"/>
<rect x="281.2" y="285.40000000000003" width="7.4" height="6.8" rx="1" fill="#f0f0f0" stroke="#8a8a8a" stroke-width="0.6"/>
<path d="M283.4 290.6 v-3.2 h2.8 v3.2" stroke="#666" stroke-width="0.7" fill="none"/>
<path d="M337.40000000000003 291.6 h2 v-5.4 h2.8 v5.4 h2" stroke="#111" stroke-width="1" fill="none"/>
<rect x="346.79999999999995" y="287.59999999999997" width="3.2" height="3.2" fill="#fff" stroke="#333" stroke-width="0.85"/>
<rect x="367.8" y="231.8" width="8.2" height="5.6" fill="#2a4a78" stroke="#1a2a48" stroke-width="0.4"/>
<path d="M369 236 v-3 M370.8 236 v-3 M372.8 236 v-3 M374.6 236 v-3" stroke="#d8e8f8" stroke-width="0.9"/>
<rect x="362.6" y="242.6" width="5.6" height="5.6" fill="#18d818" stroke="#0a7a0a" stroke-width="0.7"/>
<path d="M368.6 248.20000000000002 h2 v-5.4 h2.8 v5.4 h2" stroke="#111" stroke-width="1" fill="none"/>
<rect x="362.6" y="251.6" width="5.6" height="5.6" fill="#18d818" stroke="#0a7a0a" stroke-width="0.7"/>
<path d="M368.6 257.2 h2 v-5.4 h2.8 v5.4 h2" stroke="#111" stroke-width="1" fill="none"/>
<rect x="362.6" y="260.4" width="5.6" height="5.6" fill="#18d818" stroke="#0a7a0a" stroke-width="0.7"/>
<path d="M368.6 266.0 h2 v-5.4 h2.8 v5.4 h2" stroke="#111" stroke-width="1" fill="none"/>
<rect x="433.5" y="244.5" width="2.6" height="2.6" fill="#9ab" stroke="#334" stroke-width="0.85"/>
<rect x="455.2" y="231" width="6.8" height="7.4" fill="#d8e4ec"/>
<path d="M456 238.4 v-4 l2 1.6 l1.6 -1 l2.4 1.8 v1.6z" fill="#e02818"/>
<path d="M457 238.4 l1.4 -1.6 l1.4 0.8 l1.4 -0.8 l0.8 1.6z" fill="#f8c820"/>
<path d="M457 232.6 l3.6 1.4 l-3.2 1z" fill="#48b838"/>
<rect x="449.2" y="243.2" width="6" height="5.6" fill="#f01010"/>
<path d="M510.8 248.6 v-6 l2 2.6 l1.4 -1.6 l1.4 2.4 l1.6 -0.6 v3.2z" fill="#e8281c"/>
<path d="M511.8 248.6 l1.4 -2.4 l1.2 1.2 l1.2 -1 l1.4 2.2z" fill="#f8c820"/>
<rect x="520.0" y="243.79999999999998" width="3.6" height="3.6" fill="#fff" stroke="#e03020" stroke-width="0.85"/>
</svg>
</div>
<div style="left:137px;top:375.2px;width:463.4px;height:12px;background:#f0f0f0;"></div>
<div style="left:172.8px;top:376.4px;width:0.8px;height:9.6px;background:#dedede;"></div>
<div style="left:598.8px;top:376px;width:0.8px;height:9.6px;background:#e2e2e2;"></div>
<span class="t" style="left:138.20px;top:378px;font-size:6.5px;font-weight:normal;color:#2a2630;transform:scaleX(0.8682);">784:385</span>
<span class="t" style="left:177.00px;top:378px;font-size:6.5px;font-weight:normal;color:#2a2630;transform:scaleX(0.9756);">IntegerToAnalog1.__OpenWireRootUnit__.IntegerToAnalog1.InputPin 784:384</span>
<div style="left:137px;top:387.2px;width:463.4px;height:27.4px;background:#fbeee5;"></div>
<div style="left:158.8px;top:390px;width:47.599999999999994px;height:10.600000000000023px;background:linear-gradient(180deg,#eeeeee,#e2e2e2);border:1px solid #c2c4c8;box-sizing:border-box;"></div>
<div style="left:231.2px;top:390px;width:39.400000000000034px;height:10.600000000000023px;background:linear-gradient(180deg,#eeeeee,#e2e2e2);border:1px solid #c2c4c8;box-sizing:border-box;"></div>
<div style="left:298px;top:390px;width:95.80000000000001px;height:10.600000000000023px;background:linear-gradient(180deg,#eeeeee,#e2e2e2);border:1px solid #c2c4c8;box-sizing:border-box;"></div>
<div style="left:232.2px;top:391px;width:37.4px;height:8.6px;background:#fff;"></div>
<span class="t" style="left:142.00px;top:392px;font-size:6.6px;font-weight:normal;color:#222;transform:scaleX(0.9183);">Port:</span>
<div style="left:160px;top:390px;width:35.8px;height:11px;overflow:hidden">
<span class="t" style="left:1.00px;top:3px;font-size:6.4px;font-weight:normal;color:#222;transform:scaleX(0.8948);">COM7 (Unava</span>
</div>
<span class="t" style="left:209.00px;top:392px;font-size:6.6px;font-weight:normal;color:#222;transform:scaleX(0.8796);">Speed:</span>
<span class="t" style="left:233.40px;top:392px;font-size:6.6px;font-weight:normal;color:#222;transform:scaleX(0.8581);">9600</span>
<span class="t" style="left:274.00px;top:392px;font-size:6.6px;font-weight:normal;color:#222;transform:scaleX(0.8972);">Format:</span>
<div style="left:274px;top:398.4px;width:3.4px;height:0.6px;background:#333;"></div>
<span class="t" style="left:300.20px;top:393px;font-size:6.6px;font-weight:normal;color:#222;transform:scaleX(0.9295);">Unformatted Text</span>
<div style="left:397.6px;top:389px;width:47.4px;height:12.8px;background:linear-gradient(180deg,#f0f0f0,#e6e6e6);border:1px solid #d6d6d6;box-sizing:border-box;"></div>
<span class="t" style="left:415.80px;top:393px;font-size:6.6px;font-weight:normal;color:#111;transform:scaleX(0.8868);">Connect</span>
<div style="left:178.6px;top:405px;width:32px;height:9.6px;background:linear-gradient(180deg,#f4f4f4,#e8e8e8);border:0.8px solid #c8ccd0;border-bottom:none;box-sizing:border-box;"></div>
<div style="left:137px;top:414.4px;width:462px;height:66.4px;background:#fff;border-top:0.8px solid #c8ccd0;border-right:0.8px solid #d0d4d8;border-left:0.8px solid #d0d4d8;box-sizing:border-box;"></div>
<div style="left:137px;top:403px;width:40.6px;height:12.4px;background:#fff;border:0.8px solid #c8ccd0;border-bottom:none;box-sizing:border-box;"></div>
<span class="t" style="left:152.80px;top:406px;font-size:6.6px;font-weight:normal;color:#111;transform:scaleX(0.8420);">Terminal</span>
<span class="t" style="left:192.40px;top:407px;font-size:6.6px;font-weight:normal;color:#111;transform:scaleX(0.8229);">Scope</span>
<div style="left:142.4px;top:422.8px;width:7.2px;height:7.2px;background:#fff;border:0.9px solid #555;box-sizing:border-box;"></div>
<div style="left:186px;top:422.8px;width:7.2px;height:7.2px;background:#fff;border:0.9px solid #777;box-sizing:border-box;"></div>
<span class="t" style="left:151.00px;top:424px;font-size:6.6px;font-weight:normal;color:#111;transform:scaleX(0.8460);">Auto Scroll</span>
<span class="t" style="left:194.00px;top:424px;font-size:6.6px;font-weight:normal;color:#111;transform:scaleX(0.8251);">Hold</span>
<div style="left:138.8px;top:434px;width:459.6px;height:25.4px;background:#fff;border:1px solid #c6c8cc;box-sizing:border-box;"></div>
<div style="left:587.2px;top:435.2px;width:10.4px;height:23px;background:#f0f0f0;"></div>
<div style="left:143px;top:464.2px;width:364.6px;height:11.4px;background:#fff;border:1px solid #d4d6da;box-sizing:border-box;"></div>
<div style="left:511px;top:466.4px;width:7.2px;height:7.2px;background:#fff;border:0.9px solid #555;box-sizing:border-box;"></div>
<span class="t" style="left:519.40px;top:468px;font-size:6.6px;font-weight:normal;color:#111;transform:scaleX(0.9300);">Auto Clear</span>
<div style="left:554.4px;top:463.8px;width:39.4px;height:12.2px;background:linear-gradient(180deg,#efefef,#e6e6e6);border:1px solid #dadada;box-sizing:border-box;"></div>
<span class="t" style="left:573.00px;top:468px;font-size:6.6px;font-weight:normal;color:#111;transform:scaleX(0.8563);">Send</span>
<svg class="ov" width="748" height="486" viewBox="0 0 748 486">
<path d="M200 394.4 l2 2 l2 -2" stroke="#333" stroke-width="0.9" fill="none"/>
<path d="M264 394.4 l2 2 l2 -2" stroke="#333" stroke-width="0.9" fill="none"/>
<path d="M386.8 394.4 l2 2 l2 -2" stroke="#333" stroke-width="0.9" fill="none"/>
<path d="M406 399 l1.2 -6.4 l5.2 -1.2 l-0.6 6.6z" fill="#d8d8d8" stroke="#555" stroke-width="0.6"/>
<path d="M406.6 398.4 l5 -5.6" stroke="#444" stroke-width="0.8"/>
<path d="M589.6 390.6 l3.6 4" stroke="#8a8f98" stroke-width="0.9"/>
<path d="M593.6 394.6 l3 3.4" stroke="#dc4a3c" stroke-width="2.4" stroke-linecap="round"/>
<path d="M596.8000000000001 390.8 l-2.6 3" stroke="#b8bcc4" stroke-width="2.2"/>
<path d="M593.6 394.2 l-3.4 4" stroke="#2a7ada" stroke-width="2.4" stroke-linecap="round"/>
<rect x="141.8" y="405.4" width="6.8" height="6" fill="#2a3a2a" stroke="#111" stroke-width="0.4"/>
<path d="M142.8 409.6 l1.6 -2 l1.4 1.4 l1.6 -2" stroke="#48d848" stroke-width="0.7" fill="none"/>
<rect x="181.6" y="406.6" width="7" height="5.4" fill="#3a6ac0" stroke="#8aa8d8" stroke-width="0.5"/>
<rect x="183" y="407.6" width="4.2" height="2.4" fill="#a8c8f0"/>
<path d="M143.8 426.4 l1.8 2 l2.6 -4" stroke="#111" stroke-width="1" fill="none"/>
<path d="M512.6 470 l1.8 2 l2.7 -4" stroke="#111" stroke-width="1.1" fill="none"/>
<path d="M590.4 440.6 l2 -2 l2 2 M590.4 453 l2 2 l2 -2" stroke="#8a8a8a" stroke-width="0.9" fill="none"/>
<rect x="561.4" y="466.6" width="6.6" height="6.8" fill="#8a8a8a" stroke="#444" stroke-width="0.5"/>
<path d="M562.6 471.6 l4 -3.6" stroke="#e8e8e8" stroke-width="0.8"/>
</svg>
<div style="left:603.6px;top:41.5px;width:140.4px;height:439.3px;background:#f0f0f0;"></div>
<div style="left:603.6px;top:41.5px;width:140.4px;height:14.8px;background:#fbeee5;"></div>
<div style="left:604px;top:42.8px;width:59.6px;height:11.2px;background:#fff;border:0.8px solid #b4b8c0;box-sizing:border-box;"></div>
<span class="t" style="left:605.80px;top:46px;font-size:6.6px;font-weight:normal;color:#111;transform:scaleX(0.9021);-webkit-text-stroke:0;">inte</span>
<div style="left:735.2px;top:56.4px;width:8.8px;height:411.6px;background:#f0f0f0;"></div>
<div style="left:735.6px;top:66px;width:8px;height:199.2px;background:#cdcdcd;"></div>
<div style="left:604px;top:57.6px;width:68.20000000000005px;height:68.0px;background:#fff;border:1.5px solid #1c1c1c;box-sizing:border-box;border-radius:4px;overflow:hidden;box-shadow:1px 1px 1.5px rgba(0,0,0,0.35);"><div style="left:0;top:0;right:0;height:10.4px;background:linear-gradient(180deg,#949494 0%,#747474 50%,#565656 100%);"></div></div>
<span class="t" style="left:616.40px;top:61px;font-size:6.4px;font-weight:normal;color:#f0f0f0;transform:scaleX(1.0000);-webkit-text-stroke:0;">Output</span>
<div style="left:610px;top:74.4px;width:44px;height:44.19999999999999px;background:#fff;border:1.5px solid #1c1c1c;box-sizing:border-box;border-radius:4px;overflow:hidden;box-shadow:1px 1px 1.5px rgba(0,0,0,0.35);"><div style="left:0;top:0;right:0;height:10.4px;background:linear-gradient(180deg,#949494 0%,#747474 50%,#565656 100%);"></div></div>
<span class="t" style="left:623.00px;top:78px;font-size:6.4px;font-weight:normal;color:#f0f0f0;transform:scaleX(1.0000);-webkit-text-stroke:0;">Analog</span>
<div style="left:604px;top:129.4px;width:115.20000000000005px;height:138.99999999999997px;background:#fff;border:1.5px solid #38a83c;box-sizing:border-box;border-radius:4px;overflow:hidden;"><div style="left:0;top:0;right:0;height:10.4px;background:linear-gradient(180deg,#a4eca4,#8ee68e);"></div></div>
<span class="t" style="left:616.40px;top:133px;font-size:6.4px;font-weight:normal;color:#f0f0f0;transform:scaleX(1.0000);-webkit-text-stroke:0;">Integer</span>
<div style="left:610px;top:193.6px;width:44px;height:44.0px;background:#fff;border:1.5px solid #1c1c1c;box-sizing:border-box;border-radius:4px;overflow:hidden;box-shadow:1px 1px 1.5px rgba(0,0,0,0.35);opacity:0.3;"><div style="left:0;top:0;right:0;height:10.4px;background:linear-gradient(180deg,#949494 0%,#747474 50%,#565656 100%);"></div></div>
<span class="t" style="left:623.00px;top:197px;font-size:6.4px;font-weight:normal;color:#fff;transform:scaleX(1.0000);-webkit-text-stroke:0;">Displays</span>
<div style="left:604px;top:272.4px;width:115.20000000000005px;height:186.60000000000002px;background:#fff;border:1.5px solid #1c1c1c;box-sizing:border-box;border-radius:4px;overflow:hidden;box-shadow:1px 1px 1.5px rgba(0,0,0,0.35);"><div style="left:0;top:0;right:0;height:10.4px;background:linear-gradient(180deg,#949494 0%,#747474 50%,#565656 100%);"></div></div>
<span class="t" style="left:616.40px;top:276px;font-size:6.4px;font-weight:normal;color:#f0f0f0;transform:scaleX(1.0000);-webkit-text-stroke:0;">Converters</span>
<div style="left:610px;top:289px;width:91.60000000000002px;height:67.80000000000001px;background:#fff;border:1.5px solid #1c1c1c;box-sizing:border-box;border-radius:4px;overflow:hidden;box-shadow:1px 1px 1.5px rgba(0,0,0,0.35);"><div style="left:0;top:0;right:0;height:10.4px;background:linear-gradient(180deg,#949494 0%,#747474 50%,#565656 100%);"></div></div>
<span class="t" style="left:622.60px;top:292px;font-size:6.4px;font-weight:normal;color:#f0f0f0;transform:scaleX(1.0000);-webkit-text-stroke:0;">Integer</span>
<div style="left:610px;top:360.2px;width:44px;height:44.19999999999999px;background:#fff;border:1.5px solid #1c1c1c;box-sizing:border-box;border-radius:4px;overflow:hidden;box-shadow:1px 1px 1.5px rgba(0,0,0,0.35);"><div style="left:0;top:0;right:0;height:10.4px;background:linear-gradient(180deg,#949494 0%,#747474 50%,#565656 100%);"></div></div>
<span class="t" style="left:623.00px;top:364px;font-size:6.4px;font-weight:normal;color:#f0f0f0;transform:scaleX(1.0000);-webkit-text-stroke:0;">Analog</span>
<div style="left:658px;top:360.2px;width:43.60000000000002px;height:44.19999999999999px;background:#fff;border:1.5px solid #1c1c1c;box-sizing:border-box;border-radius:4px;overflow:hidden;box-shadow:1px 1px 1.5px rgba(0,0,0,0.35);opacity:0.3;"><div style="left:0;top:0;right:0;height:10.4px;background:linear-gradient(180deg,#949494 0%,#747474 50%,#565656 100%);"></div></div>
<span class="t" style="left:672.00px;top:364px;font-size:6.4px;font-weight:normal;color:#fff;transform:scaleX(1.0000);-webkit-text-stroke:0;">Text</span>
<div style="left:610px;top:408px;width:44px;height:43.39999999999998px;background:#fff;border:1.5px solid #1c1c1c;box-sizing:border-box;border-radius:4px;overflow:hidden;box-shadow:1px 1px 1.5px rgba(0,0,0,0.35);opacity:0.3;"><div style="left:0;top:0;right:0;height:10.4px;background:linear-gradient(180deg,#949494 0%,#747474 50%,#565656 100%);"></div></div>
<span class="t" style="left:622.00px;top:411px;font-size:6.4px;font-weight:normal;color:#fff;transform:scaleX(1.0000);-webkit-text-stroke:0;">Digital</span>
<div style="left:604px;top:462.4px;width:68.20000000000005px;height:37.60000000000002px;background:#fff;border:1.5px solid #1c1c1c;box-sizing:border-box;border-radius:4px;overflow:hidden;box-shadow:1px 1px 1.5px rgba(0,0,0,0.35);"><div style="left:0;top:0;right:0;height:10.4px;background:linear-gradient(180deg,#949494 0%,#747474 50%,#565656 100%);"></div></div>
<span class="t" style="left:617.00px;top:466px;font-size:6.4px;font-weight:normal;color:#f0f0f0;transform:scaleX(1.0000);-webkit-text-stroke:0;">Analog</span>
<div style="left:675.6px;top:462.4px;width:43.60000000000002px;height:37.60000000000002px;background:#fff;border:1.5px solid #1c1c1c;box-sizing:border-box;border-radius:4px;overflow:hidden;box-shadow:1px 1px 1.5px rgba(0,0,0,0.35);opacity:0.22;"><div style="left:0;top:0;right:0;height:10.4px;background:linear-gradient(180deg,#949494 0%,#747474 50%,#565656 100%);"></div></div>
<svg class="ov" width="748" height="486" viewBox="0 0 748 486">
<defs><linearGradient id="ig" x1="0" y1="0" x2="0" y2="1"><stop offset="0" stop-color="#a6a6a6"/><stop offset="0.45" stop-color="#8a8a8a"/><stop offset="0.55" stop-color="#727272"/><stop offset="1" stop-color="#6a6a6a"/></linearGradient><linearGradient id="igf" x1="0" y1="0" x2="0" y2="1"><stop offset="0" stop-color="#eeeeee"/><stop offset="1" stop-color="#e2e2e2"/></linearGradient></defs>
<g>
<rect x="616.4" y="91.4" width="19.2" height="19.2" rx="1.6" fill="url(#ig)" stroke="#3a3a3a" stroke-width="0.9"/>
<circle cx="626" cy="101" r="8" fill="#18a0a8"/>
<path d="M619 105 c3 -14 6 -14 7 -4 c1 8 4 8 7 -4" stroke="#e84a5a" stroke-width="1.2" fill="none"/>
<text x="620.4" y="105.4" font-family="Liberation Sans" font-weight="bold" font-size="9.5" fill="#fff">D</text>
<path d="M628 100.6 h3 v-2 l3.2 3.6 l-3.2 3.6 v-2 h-3z" fill="#2a5ad8"/>
</g>
<g>
<rect x="610.4" y="146.4" width="19.2" height="19.2" rx="1.6" fill="url(#ig)" stroke="#3a3a3a" stroke-width="0.9"/>
<text x="611.6" y="155.4" font-family="Liberation Sans" font-size="8.2" fill="#e09888">1</text>
<text x="615.2" y="156.2" font-family="Liberation Sans" font-size="9" fill="#9ab8e8">2</text>
<path d="M626.4 148.4 l-7.4 5 l7.4 5z" fill="#8ad83c"/>
<path d="M623 148.6 l2 2 l-2 2z" fill="#e86a30"/>
<path d="M617.4 161.2 v-5.4 l3.4 2.6 l2.6 -2.8 l2.6 2.6 l2.6 -2.2 v8.6z" fill="#e8201a"/>
<path d="M617.8 161.2 l3.2 -1.8 l2.4 1.6 l2.4 -1.8 l3 1.4 l0 4 z" fill="#fcc820"/>
</g>
<rect x="634.3" y="146.4" width="19.2" height="19.2" rx="1.6" fill="url(#igf)" stroke="#d4d4d4" stroke-width="0.8"/>
<g opacity="0.16999999999999998">
<path d="M643.9 151 h4 v-2.4 l4.4 4 l-4.4 4 v-2.4 h-4z" fill="#58d020"/>
<text x="635.9" y="163" font-family="Liberation Sans" font-weight="bold" font-size="9" fill="#d84030">1</text>
<text x="640.5" y="163.4" font-family="Liberation Sans" font-weight="bold" font-size="9" fill="#3a80e0">2</text>
<text x="645.5" y="163" font-family="Liberation Sans" font-weight="bold" font-size="9" fill="#40b030">3</text>
</g>
<rect x="658.1999999999999" y="146.4" width="19.2" height="19.2" rx="1.6" fill="url(#igf)" stroke="#d4d4d4" stroke-width="0.8"/>
<g opacity="0.16999999999999998">
<path d="M667.8 151 h4 v-2.4 l4.4 4 l-4.4 4 v-2.4 h-4z" fill="#58d020"/>
<text x="659.8" y="163" font-family="Liberation Sans" font-weight="bold" font-size="9" fill="#d84030">1</text>
<text x="664.4" y="163.4" font-family="Liberation Sans" font-weight="bold" font-size="9" fill="#3a80e0">2</text>
<text x="669.4" y="163" font-family="Liberation Sans" font-weight="bold" font-size="9" fill="#40b030">3</text>
<path d="M661.8 162 l11 -11" stroke="#2a90e8" stroke-width="3"/>
<path d="M666.8 155 l7 7" stroke="#50c020" stroke-width="2.6"/>
</g>
<rect x="682.0" y="146.4" width="19.2" height="19.2" rx="1.6" fill="url(#igf)" stroke="#d4d4d4" stroke-width="0.8"/>
<g opacity="0.16999999999999998">
<path d="M691.6 151 h4 v-2.4 l4.4 4 l-4.4 4 v-2.4 h-4z" fill="#58d020"/>
<text x="683.6" y="163" font-family="Liberation Sans" font-weight="bold" font-size="9" fill="#d84030">1</text>
<text x="688.2" y="163.4" font-family="Liberation Sans" font-weight="bold" font-size="9" fill="#3a80e0">2</text>
<text x="693.2" y="163" font-family="Liberation Sans" font-weight="bold" font-size="9" fill="#40b030">3</text>
</g>
<rect x="610.4" y="170.4" width="19.2" height="19.2" rx="1.6" fill="url(#igf)" stroke="#d4d4d4" stroke-width="0.8"/>
<g opacity="0.16999999999999998">
<path d="M620 175 h4 v-2.4 l4.4 4 l-4.4 4 v-2.4 h-4z" fill="#58d020"/>
<text x="612" y="187" font-family="Liberation Sans" font-weight="bold" font-size="9" fill="#d84030">1</text>
<text x="616.6" y="187.4" font-family="Liberation Sans" font-weight="bold" font-size="9" fill="#3a80e0">2</text>
<text x="621.6" y="187" font-family="Liberation Sans" font-weight="bold" font-size="9" fill="#40b030">3</text>
</g>
<rect x="634.3" y="170.4" width="19.2" height="19.2" rx="1.6" fill="url(#igf)" stroke="#d4d4d4" stroke-width="0.8"/>
<g opacity="0.16999999999999998">
<path d="M643.9 175 h4 v-2.4 l4.4 4 l-4.4 4 v-2.4 h-4z" fill="#58d020"/>
<text x="635.9" y="187" font-family="Liberation Sans" font-weight="bold" font-size="9" fill="#d84030">1</text>
<text x="640.5" y="187.4" font-family="Liberation Sans" font-weight="bold" font-size="9" fill="#3a80e0">2</text>
<text x="645.5" y="187" font-family="Liberation Sans" font-weight="bold" font-size="9" fill="#40b030">3</text>
</g>
<rect x="658.1999999999999" y="170.4" width="19.2" height="19.2" rx="1.6" fill="url(#igf)" stroke="#d4d4d4" stroke-width="0.8"/>
<g opacity="0.16999999999999998">
<path d="M667.8 175 h4 v-2.4 l4.4 4 l-4.4 4 v-2.4 h-4z" fill="#58d020"/>
<text x="659.8" y="187" font-family="Liberation Sans" font-weight="bold" font-size="9" fill="#d84030">1</text>
<text x="664.4" y="187.4" font-family="Liberation Sans" font-weight="bold" font-size="9" fill="#3a80e0">2</text>
<text x="669.4" y="187" font-family="Liberation Sans" font-weight="bold" font-size="9" fill="#40b030">3</text>
</g>
<rect x="682.0" y="170.4" width="19.2" height="19.2" rx="1.6" fill="url(#igf)" stroke="#d4d4d4" stroke-width="0.8"/>
<g opacity="0.16999999999999998">
<path d="M691.6 175 h4 v-2.4 l4.4 4 l-4.4 4 v-2.4 h-4z" fill="#58d020"/>
<text x="683.6" y="187" font-family="Liberation Sans" font-weight="bold" font-size="9" fill="#d84030">1</text>
<text x="688.2" y="187.4" font-family="Liberation Sans" font-weight="bold" font-size="9" fill="#3a80e0">2</text>
<text x="693.2" y="187" font-family="Liberation Sans" font-weight="bold" font-size="9" fill="#40b030">3</text>
</g>
<rect x="658.1999999999999" y="194.20000000000002" width="19.2" height="19.2" rx="1.6" fill="url(#igf)" stroke="#d4d4d4" stroke-width="0.8"/>
<g opacity="0.16999999999999998">
<path d="M667.8 198.8 h4 v-2.4 l4.4 4 l-4.4 4 v-2.4 h-4z" fill="#58d020"/>
<text x="659.8" y="210.8" font-family="Liberation Sans" font-weight="bold" font-size="9" fill="#d84030">1</text>
<text x="664.4" y="211.20000000000002" font-family="Liberation Sans" font-weight="bold" font-size="9" fill="#3a80e0">2</text>
<text x="669.4" y="210.8" font-family="Liberation Sans" font-weight="bold" font-size="9" fill="#40b030">3</text>
<path d="M661.8 209.8 l11 -11" stroke="#2a90e8" stroke-width="3"/>
<path d="M666.8 202.8 l7 7" stroke="#50c020" stroke-width="2.6"/>
</g>
<rect x="682.0" y="194.20000000000002" width="19.2" height="19.2" rx="1.6" fill="url(#igf)" stroke="#d4d4d4" stroke-width="0.8"/>
<g opacity="0.16999999999999998">
<path d="M691.6 198.8 h4 v-2.4 l4.4 4 l-4.4 4 v-2.4 h-4z" fill="#58d020"/>
<text x="683.6" y="210.8" font-family="Liberation Sans" font-weight="bold" font-size="9" fill="#d84030">1</text>
<text x="688.2" y="211.20000000000002" font-family="Liberation Sans" font-weight="bold" font-size="9" fill="#3a80e0">2</text>
<text x="693.2" y="210.8" font-family="Liberation Sans" font-weight="bold" font-size="9" fill="#40b030">3</text>
</g>
<rect x="658.1999999999999" y="218.0" width="19.2" height="19.2" rx="1.6" fill="url(#igf)" stroke="#d4d4d4" stroke-width="0.8"/>
<g opacity="0.16999999999999998">
<path d="M667.8 222.6 h4 v-2.4 l4.4 4 l-4.4 4 v-2.4 h-4z" fill="#58d020"/>
<text x="659.8" y="234.6" font-family="Liberation Sans" font-weight="bold" font-size="9" fill="#d84030">1</text>
<text x="664.4" y="235.0" font-family="Liberation Sans" font-weight="bold" font-size="9" fill="#3a80e0">2</text>
<text x="669.4" y="234.6" font-family="Liberation Sans" font-weight="bold" font-size="9" fill="#40b030">3</text>
</g>
<rect x="682.0" y="218.0" width="19.2" height="19.2" rx="1.6" fill="url(#igf)" stroke="#d4d4d4" stroke-width="0.8"/>
<g opacity="0.16999999999999998">
<path d="M691.6 222.6 h4 v-2.4 l4.4 4 l-4.4 4 v-2.4 h-4z" fill="#58d020"/>
<text x="683.6" y="234.6" font-family="Liberation Sans" font-weight="bold" font-size="9" fill="#d84030">1</text>
<text x="688.2" y="235.0" font-family="Liberation Sans" font-weight="bold" font-size="9" fill="#3a80e0">2</text>
<text x="693.2" y="234.6" font-family="Liberation Sans" font-weight="bold" font-size="9" fill="#40b030">3</text>
</g>
<rect x="610.4" y="241.8" width="19.2" height="19.2" rx="1.6" fill="url(#igf)" stroke="#d4d4d4" stroke-width="0.8"/>
<g opacity="0.16999999999999998">
<path d="M620 246.4 h4 v-2.4 l4.4 4 l-4.4 4 v-2.4 h-4z" fill="#58d020"/>
<text x="612" y="258.4" font-family="Liberation Sans" font-weight="bold" font-size="9" fill="#d84030">1</text>
<text x="616.6" y="258.8" font-family="Liberation Sans" font-weight="bold" font-size="9" fill="#3a80e0">2</text>
<text x="621.6" y="258.4" font-family="Liberation Sans" font-weight="bold" font-size="9" fill="#40b030">3</text>
</g>
<rect x="634.3" y="241.8" width="19.2" height="19.2" rx="1.6" fill="url(#igf)" stroke="#d4d4d4" stroke-width="0.8"/>
<g opacity="0.16999999999999998">
<path d="M643.9 246.4 h4 v-2.4 l4.4 4 l-4.4 4 v-2.4 h-4z" fill="#58d020"/>
<text x="635.9" y="258.4" font-family="Liberation Sans" font-weight="bold" font-size="9" fill="#d84030">1</text>
<text x="640.5" y="258.8" font-family="Liberation Sans" font-weight="bold" font-size="9" fill="#3a80e0">2</text>
<text x="645.5" y="258.4" font-family="Liberation Sans" font-weight="bold" font-size="9" fill="#40b030">3</text>
</g>
<rect x="616.4" y="210.4" width="19.2" height="19.2" rx="1.6" fill="url(#igf)" stroke="#d4d4d4" stroke-width="0.8"/>
<g opacity="0.16999999999999998">
<path d="M626 215 h4 v-2.4 l4.4 4 l-4.4 4 v-2.4 h-4z" fill="#58d020"/>
<text x="618" y="227" font-family="Liberation Sans" font-weight="bold" font-size="9" fill="#d84030">1</text>
<text x="622.6" y="227.4" font-family="Liberation Sans" font-weight="bold" font-size="9" fill="#3a80e0">2</text>
<text x="627.6" y="227" font-family="Liberation Sans" font-weight="bold" font-size="9" fill="#40b030">3</text>
</g>
<g>
<rect x="616.4" y="306.4" width="19.2" height="19.2" rx="1.6" fill="url(#ig)" stroke="#3a3a3a" stroke-width="0.9"/>
<text x="617.6" y="315.4" font-family="Liberation Sans" font-size="8.2" fill="#e09888">1</text>
<text x="621.2" y="316.2" font-family="Liberation Sans" font-size="9" fill="#9ab8e8">2</text>
<path d="M632.4 308.4 l-7.4 5 l7.4 5z" fill="#8ad83c"/>
<path d="M629 308.6 l2 2 l-2 2z" fill="#e86a30"/>
<path d="M623.4 321.2 v-5.4 l3.4 2.6 l2.6 -2.8 l2.6 2.6 l2.6 -2.2 v8.6z" fill="#e8201a"/>
<path d="M623.8 321.2 l3.2 -1.8 l2.4 1.6 l2.4 -1.8 l3 1.4 l0 4 z" fill="#fcc820"/>
</g>
<rect x="640.4" y="306.4" width="19.2" height="19.2" rx="1.6" fill="url(#igf)" stroke="#d4d4d4" stroke-width="0.8"/>
<g opacity="0.16999999999999998">
<path d="M650 311 h4 v-2.4 l4.4 4 l-4.4 4 v-2.4 h-4z" fill="#58d020"/>
<text x="642" y="323" font-family="Liberation Sans" font-weight="bold" font-size="9" fill="#d84030">1</text>
<text x="646.6" y="323.4" font-family="Liberation Sans" font-weight="bold" font-size="9" fill="#3a80e0">2</text>
<text x="651.6" y="323" font-family="Liberation Sans" font-weight="bold" font-size="9" fill="#40b030">3</text>
</g>
<rect x="664.4" y="306.4" width="19.2" height="19.2" rx="1.6" fill="url(#igf)" stroke="#d4d4d4" stroke-width="0.8"/>
<g opacity="0.16999999999999998">
<path d="M674 311 h4 v-2.4 l4.4 4 l-4.4 4 v-2.4 h-4z" fill="#58d020"/>
<text x="666" y="323" font-family="Liberation Sans" font-weight="bold" font-size="9" fill="#d84030">1</text>
<text x="670.6" y="323.4" font-family="Liberation Sans" font-weight="bold" font-size="9" fill="#3a80e0">2</text>
<text x="675.6" y="323" font-family="Liberation Sans" font-weight="bold" font-size="9" fill="#40b030">3</text>
</g>
<rect x="616.4" y="330.4" width="19.2" height="19.2" rx="1.6" fill="url(#igf)" stroke="#d4d4d4" stroke-width="0.8"/>
<g opacity="0.16999999999999998">
<path d="M626 335 h4 v-2.4 l4.4 4 l-4.4 4 v-2.4 h-4z" fill="#58d020"/>
<text x="618" y="347" font-family="Liberation Sans" font-weight="bold" font-size="9" fill="#d84030">1</text>
<text x="622.6" y="347.4" font-family="Liberation Sans" font-weight="bold" font-size="9" fill="#3a80e0">2</text>
<text x="627.6" y="347" font-family="Liberation Sans" font-weight="bold" font-size="9" fill="#40b030">3</text>
</g>
<g>
<rect x="616.4" y="377.79999999999995" width="19.2" height="19.2" rx="1.6" fill="url(#ig)" stroke="#3a3a3a" stroke-width="0.9"/>
<path d="M618.4 388.4 v-7.6 l3 3.2 l2.4 -2.4 l2.4 3 v3.8z" fill="#e84a3a"/>
<path d="M633.4 380.0 l-6.6 4.4 l6.6 4.4z" fill="#58c838"/>
<path d="M619 387.4 l5.6 3.6" stroke="#f8d020" stroke-width="2.2"/>
<text x="622" y="395.79999999999995" font-family="Liberation Sans" font-weight="bold" font-size="8.6" fill="#c82818">1</text>
<text x="626" y="395.79999999999995" font-family="Liberation Sans" font-weight="bold" font-size="8.6" fill="#d8b020">2</text>
<text x="630" y="395.79999999999995" font-family="Liberation Sans" font-weight="bold" font-size="8.6" fill="#38a838">3</text>
</g>
<rect x="664.4" y="377.79999999999995" width="19.2" height="19.2" rx="1.6" fill="url(#igf)" stroke="#d4d4d4" stroke-width="0.8"/>
<g opacity="0.16999999999999998">
<path d="M674 382.4 h4 v-2.4 l4.4 4 l-4.4 4 v-2.4 h-4z" fill="#58d020"/>
<text x="666" y="394.4" font-family="Liberation Sans" font-weight="bold" font-size="9" fill="#d84030">1</text>
<text x="670.6" y="394.79999999999995" font-family="Liberation Sans" font-weight="bold" font-size="9" fill="#3a80e0">2</text>
<text x="675.6" y="394.4" font-family="Liberation Sans" font-weight="bold" font-size="9" fill="#40b030">3</text>
</g>
<rect x="616.4" y="425.4" width="19.2" height="19.2" rx="1.6" fill="url(#igf)" stroke="#d4d4d4" stroke-width="0.8"/>
<g opacity="0.16999999999999998">
<path d="M626 430 h4 v-2.4 l4.4 4 l-4.4 4 v-2.4 h-4z" fill="#58d020"/>
<text x="618" y="442" font-family="Liberation Sans" font-weight="bold" font-size="9" fill="#d84030">1</text>
<text x="622.6" y="442.4" font-family="Liberation Sans" font-weight="bold" font-size="9" fill="#3a80e0">2</text>
<text x="627.6" y="442" font-family="Liberation Sans" font-weight="bold" font-size="9" fill="#40b030">3</text>
</g>
<path d="M606.4 66.6 l2 -5 l2 5z" fill="#e8d8a0"/><path d="M609.6 66.4 l3 -3" stroke="#c8a040" stroke-width="1"/>
<path d="M612.6 83 v-5.6 l1.8 2.4 l1.4 -1.4 l1.4 2.2 l1.4 -0.6 v3z" fill="#e8281c"/>
<path d="M613.6 83 l1.2 -2 l1.2 1 l1.2 -1 l1.2 2z" fill="#f8c820"/>
<text x="606.2" y="137.39999999999998" font-family="Liberation Sans" font-weight="bold" font-size="5.6" fill="#d83020">1</text>
<text x="608.6" y="137.39999999999998" font-family="Liberation Sans" font-weight="bold" font-size="5.6" fill="#e8c020">2</text>
<text x="611.0" y="137.39999999999998" font-family="Liberation Sans" font-weight="bold" font-size="5.6" fill="#3a8ae0">3</text>
<rect x="606.2" y="275" width="3" height="3" fill="#e83828"/><rect x="609.4" y="275" width="3" height="3" fill="#f8c020"/><rect x="606.2" y="278.4" width="3" height="3" fill="#48b838"/><rect x="609.4" y="278.4" width="3" height="3" fill="#3a8ae0"/>
<text x="611.6" y="297.2" font-family="Liberation Sans" font-weight="bold" font-size="5.6" fill="#d83020">1</text>
<text x="614.0" y="297.2" font-family="Liberation Sans" font-weight="bold" font-size="5.6" fill="#e8c020">2</text>
<text x="616.4" y="297.2" font-family="Liberation Sans" font-weight="bold" font-size="5.6" fill="#3a8ae0">3</text>
<path d="M612.6 369 v-5.6 l1.8 2.4 l1.4 -1.4 l1.4 2.2 l1.4 -0.6 v3z" fill="#e8281c"/>
<path d="M613.6 369 l1.2 -2 l1.2 1 l1.2 -1 l1.2 2z" fill="#f8c820"/>
<g opacity="0.45"><text x="660.2" y="368.6" font-family="Liberation Sans" font-size="5.4" fill="#d88a30">A</text><text x="663.4" y="368.6" font-family="Liberation Sans" font-size="5.4" fill="#5a8ad0">bc</text></g>
<g opacity="0.35"><rect x="612.6" y="410.6" width="5.6" height="6.4" rx="1.2" fill="#ea4a3a"/></g>
<g opacity="0.28"><circle cx="614.6" cy="199.2" r="2.6" fill="#555"/><path d="M611.6 196.4 l6 5.6 M617.6 196.4 l-6 5.6" stroke="#555" stroke-width="1"/></g>
<path d="M668 45 l7.6 7.4 M675.6 45 l-7.6 7.4" stroke="#e02818" stroke-width="1.5"/>
<path d="M669.6 44.6 h4.6 l-1.6 3 v3.4 l-1.4 0.8 v-4.2z" fill="#b8d0f0" stroke="#4a78c0" stroke-width="0.4" opacity="0.8"/>
<rect x="678" y="42.6" width="11" height="11.6" fill="#c4dcf3" stroke="#7fb2e4" stroke-width="0.8"/>
<path d="M680.4 52.4 l3 -8 l2.6 8z" fill="#2a4aa8"/><ellipse cx="683.4" cy="52" rx="4.2" ry="1.3" fill="#3a5ab8"/>
<path d="M690.2 47.8 h2.8 l-1.4 1.6z" fill="#222"/>
<rect x="695.6" y="44.4" width="7.4" height="6" rx="0.6" fill="#f0d468" stroke="#b89030" stroke-width="0.5"/><path d="M699.4 51.6 l2.6 2 l0 -3z" fill="#d8a828"/>
<path d="M706.6 45.0 h3 l0.8 1 h4.2 v6 h-8z" fill="#ecc858" stroke="#c09a38" stroke-width="0.5"/>
<rect x="708.4" y="47.4" width="4.8" height="4.6" rx="1" fill="#4aa8ec" stroke="#2a78c0" stroke-width="0.4"/>
<rect x="713.0" y="49.0" width="2" height="2" fill="#ecc858" stroke="#c09a38" stroke-width="0.3"/>
<path d="M718.6 45.0 h3 l0.8 1 h4.2 v6 h-8z" fill="#ecc858" stroke="#c09a38" stroke-width="0.5"/>
<rect x="720.4" y="47.4" width="4.8" height="4.6" rx="1" fill="#4aa8ec" stroke="#2a78c0" stroke-width="0.4"/>
<rect x="725.0" y="49.0" width="2" height="2" fill="#ecc858" stroke="#c09a38" stroke-width="0.3"/>
<path d="M731.8 44.800000000000004 l3.6 4" stroke="#8a8f98" stroke-width="0.9"/>
<path d="M735.8 48.800000000000004 l3 3.4" stroke="#dc4a3c" stroke-width="2.4" stroke-linecap="round"/>
<path d="M739.0 45.0 l-2.6 3" stroke="#b8bcc4" stroke-width="2.2"/>
<path d="M735.8 48.400000000000006 l-3.4 4" stroke="#2a7ada" stroke-width="2.4" stroke-linecap="round"/>
<path d="M737.4 61.4 l2 -2 l2 2 M737.4 462.2 l2 2 l2 -2" stroke="#3c3c3c" stroke-width="1.1" fill="none"/>
</svg>
<div style="left:603.6px;top:468.2px;width:140.4px;height:12.6px;background:#fbeee5;"></div>
<span class="t" style="left:650.60px;top:472px;font-size:6.4px;font-weight:bold;color:#111;transform:scaleX(0.9657);">Arduino eBay Ads:</span>
<svg class="ov" width="748" height="486" viewBox="0 0 748 486">
<path d="M721.8 470.6 l3.6 4" stroke="#8a8f98" stroke-width="0.9"/>
<path d="M725.8 474.6 l3 3.4" stroke="#dc4a3c" stroke-width="2.4" stroke-linecap="round"/>
<path d="M729.0 470.8 l-2.6 3" stroke="#b8bcc4" stroke-width="2.2"/>
<path d="M725.8 474.2 l-3.4 4" stroke="#2a7ada" stroke-width="2.4" stroke-linecap="round"/>
<rect x="733.6" y="470.2" width="7.6" height="8" rx="1" fill="#e02828" stroke="#8a1010" stroke-width="0.5"/>
<circle cx="737.4" cy="474.4" r="2.2" fill="none" stroke="#fff" stroke-width="0.9"/><path d="M737.4 471.6 v2.6" stroke="#fff" stroke-width="0.9"/>
</svg>
<div style="left:0px;top:480.6px;width:748px;height:5.4px;background:#adc8e8;"></div>
<div style="left:744px;top:0px;width:4px;height:486px;background:#adc8e8;"></div>
</div></body></html>
